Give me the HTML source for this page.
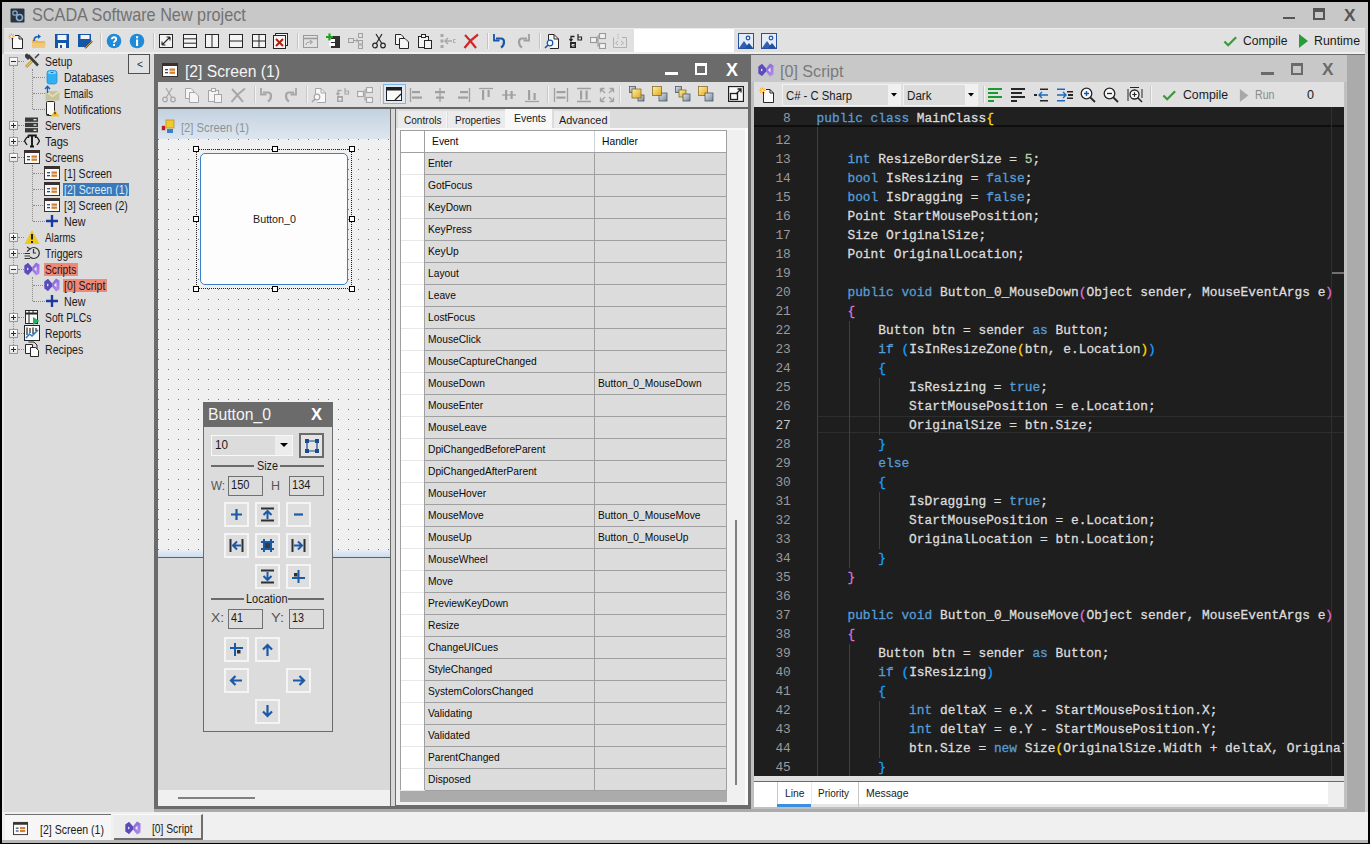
<!DOCTYPE html><html><head><meta charset="utf-8"><style>
html,body{margin:0;padding:0;}
body{width:1370px;height:844px;position:relative;overflow:hidden;background:#000;font-family:"Liberation Sans",sans-serif;}
div,svg{box-sizing:border-box;}
</style></head><body>
<div style="position:absolute;left:2px;top:2px;width:1366px;height:841px;background:#c8c8c8;"></div>
<svg style="position:absolute;left:10px;top:8px;" width="15" height="15" viewBox="0 0 15 15"><rect x="0.5" y="0.5" width="14" height="14" rx="1" fill="#2a3440"/><circle cx="5" cy="5" r="2.2" fill="none" stroke="#8aa8c8" stroke-width="1.3"/><circle cx="9.5" cy="9.5" r="3" fill="none" stroke="#8ab0d8" stroke-width="1.6"/></svg>
<div style="position:absolute;left:32px;top:6.96px;font-family:'Liberation Sans';font-size:17.7px;color:#727272;white-space:pre;line-height:1;transform:scaleX(0.9179);transform-origin:0 0;">SCADA Software New project</div>
<div style="position:absolute;left:1283px;top:17px;width:12px;height:2px;background:#555555;"></div>
<div style="position:absolute;left:1313px;top:8px;width:12px;height:12px;border:2px solid #555555;border-top-width:4px;"></div>
<div style="position:absolute;left:1343.5px;top:6.55px;font-family:'Liberation Sans';font-size:17px;color:#555555;white-space:pre;line-height:1;font-weight:bold;transform:scaleX(1.0142);transform-origin:0 0;">X</div>
<div style="position:absolute;left:4px;top:28px;width:1361px;height:25px;background:#e1e1e1;border-top:1px solid #ececec;"></div>
<div style="position:absolute;left:4px;top:52px;width:1361px;height:2px;background:#f0f0f0;"></div>
<div style="position:absolute;left:634px;top:29px;width:100px;height:23px;background:#fff;"></div>
<svg style="position:absolute;left:8px;top:33px;" width="16" height="16" viewBox="0 0 16 16"><path d="M4.5 4.5 V15.5 H14.5 V6 L11 2.5 H7" fill="#fafafa" stroke="#262626" stroke-width="1"/><path d="M11 2.5 V6 H14.5" fill="none" stroke="#262626"/><g stroke="#f0a030" stroke-width="1"><path d="M3.5 0.5 V6.5 M0.5 3.5 H6.5 M1.3 1.3 L5.7 5.7 M5.7 1.3 L1.3 5.7"/></g><circle cx="3.5" cy="3.5" r="1.2" fill="#fff3c0"/></svg>
<svg style="position:absolute;left:31px;top:33px;" width="16" height="16" viewBox="0 0 16 16"><path d="M1 7 H6 L7 8 H14 V15 H1 Z" fill="#e8b860"/><path d="M1 10 H15 L13.5 15 H1 Z" fill="#f0c878"/><path d="M3 8 C3 4 5 3.5 8 3.5" fill="none" stroke="#1a5fb4" stroke-width="1.6"/><path d="M7 1 L10 3.5 L7 6 Z" fill="#1a5fb4"/></svg>
<svg style="position:absolute;left:54px;top:33px;" width="16" height="16" viewBox="0 0 16 16"><path d="M1 1 H15 V15 H1 Z" fill="#1656a8"/><rect x="3.5" y="2" width="9" height="5" fill="#f4f4f4"/><rect x="4" y="10" width="8" height="5" fill="#f4f4f4"/><rect x="6" y="12" width="2" height="3" fill="#1656a8"/></svg>
<svg style="position:absolute;left:77px;top:33px;" width="16" height="16" viewBox="0 0 16 16"><path d="M1 1 H14 V9 L9 14 H1 Z" fill="#1656a8"/><rect x="3.5" y="2" width="9" height="4" fill="#f4f4f4"/><path d="M8 15 L15 8" stroke="#505050" stroke-width="2.2"/><path d="M8 15 L15 8" stroke="#e0a040" stroke-width="0.8"/></svg>
<svg style="position:absolute;left:106px;top:33px;" width="16" height="16" viewBox="0 0 16 16"><circle cx="8" cy="8" r="7.3" fill="#1f8ad8"/><path d="M5.8 6.2 C5.8 3.6 10.2 3.6 10.2 6.2 C10.2 8 8 8 8 9.8" fill="none" stroke="#fff" stroke-width="1.9"/><rect x="7" y="11" width="2" height="2" fill="#fff"/></svg>
<svg style="position:absolute;left:129px;top:33px;" width="16" height="16" viewBox="0 0 16 16"><circle cx="8" cy="8" r="7.3" fill="#1f8ad8"/><rect x="7" y="3.2" width="2.1" height="2.1" fill="#fff"/><rect x="7" y="6.5" width="2.1" height="6.5" fill="#fff"/></svg>
<svg style="position:absolute;left:158px;top:33px;" width="16" height="16" viewBox="0 0 16 16"><rect x="1.5" y="1.5" width="13" height="13" fill="#f4f4f4" stroke="#262626"/><path d="M4 12 L12 4 M4 12 V8.5 M4 12 H7.5 M12 4 H8.5 M12 4 V7.5" stroke="#262626" fill="none" stroke-width="1.1"/></svg>
<svg style="position:absolute;left:182px;top:33px;" width="16" height="16" viewBox="0 0 16 16"><rect x="1.5" y="1.5" width="13" height="13" fill="#f4f4f4" stroke="#262626"/><path d="M1.5 5.8 H14.5 M1.5 10.2 H14.5" stroke="#262626"/></svg>
<svg style="position:absolute;left:204px;top:33px;" width="16" height="16" viewBox="0 0 16 16"><rect x="1.5" y="1.5" width="13" height="13" fill="#f4f4f4" stroke="#262626"/><path d="M8 1.5 V14.5" stroke="#262626"/></svg>
<svg style="position:absolute;left:228px;top:33px;" width="16" height="16" viewBox="0 0 16 16"><rect x="1.5" y="1.5" width="13" height="13" fill="#f4f4f4" stroke="#262626"/><path d="M1.5 8 H14.5" stroke="#262626"/></svg>
<svg style="position:absolute;left:251px;top:33px;" width="16" height="16" viewBox="0 0 16 16"><rect x="1.5" y="1.5" width="13" height="13" fill="#f4f4f4" stroke="#262626"/><path d="M1.5 8 H14.5 M8 1.5 V14.5" stroke="#262626"/></svg>
<svg style="position:absolute;left:272px;top:33px;" width="16" height="16" viewBox="0 0 16 16"><rect x="3.5" y="0.5" width="12" height="12" fill="#f4f4f4" stroke="#262626"/><rect x="1.5" y="2.5" width="12" height="13" fill="#f4f4f4" stroke="#262626"/><path d="M4 6 L11 13 M11 6 L4 13" stroke="#b02010" stroke-width="2"/></svg>
<svg style="position:absolute;left:302px;top:33px;" width="16" height="16" viewBox="0 0 16 16"><rect x="1.5" y="2.5" width="14" height="12" fill="none" stroke="#9a9a9a"/><path d="M1.5 5.5 H15.5" stroke="#9a9a9a" stroke-width="1.5"/><path d="M4 12 C4 9 7 9 10 9 M8 7 L10.5 9 L8 11" fill="none" stroke="#9a9a9a"/></svg>
<svg style="position:absolute;left:325px;top:33px;" width="16" height="16" viewBox="0 0 16 16"><rect x="6" y="3" width="9" height="12" fill="#303030"/><rect x="4" y="6" width="6" height="3" fill="#fff"/><rect x="4" y="10" width="6" height="3" fill="#fff"/><path d="M4.5 0.5 V7.5 M1 4 H8" stroke="#20a020" stroke-width="2.2"/></svg>
<svg style="position:absolute;left:348px;top:33px;" width="16" height="16" viewBox="0 0 16 16"><rect x="0.5" y="5.5" width="5" height="4" fill="none" stroke="#a0a0a0"/><rect x="10.5" y="0.5" width="4" height="4" fill="none" stroke="#a0a0a0"/><rect x="10.5" y="7.5" width="4" height="3.5" fill="none" stroke="#a0a0a0"/><rect x="10.5" y="12" width="4" height="3.5" fill="none" stroke="#a0a0a0"/><path d="M5.5 7.5 H10 M8 5.5 L10 7.5 L8 9.5" fill="none" stroke="#a0a0a0"/></svg>
<svg style="position:absolute;left:371px;top:33px;" width="16" height="16" viewBox="0 0 16 16"><circle cx="4" cy="12.5" r="2.3" fill="none" stroke="#262626" stroke-width="1.2"/><circle cx="12" cy="12.5" r="2.3" fill="none" stroke="#262626" stroke-width="1.2"/><path d="M5.2 10.5 L11 1 M10.8 10.5 L5 1" stroke="#262626" stroke-width="1.2"/></svg>
<svg style="position:absolute;left:394px;top:33px;" width="16" height="16" viewBox="0 0 16 16"><path d="M1.5 1.5 H7 L9.5 4 V11.5 H1.5 Z" fill="#f4f4f4" stroke="#262626"/><path d="M5.5 5.5 H11 L14.5 9 V15.5 H5.5 Z" fill="#f4f4f4" stroke="#262626"/></svg>
<svg style="position:absolute;left:417px;top:33px;" width="16" height="16" viewBox="0 0 16 16"><rect x="1.5" y="3.5" width="10" height="11" fill="#f4f4f4" stroke="#262626"/><rect x="4.5" y="1.5" width="4" height="3" fill="#f4f4f4" stroke="#262626"/><rect x="7.5" y="7.5" width="7" height="8" fill="#f4f4f4" stroke="#262626"/></svg>
<svg style="position:absolute;left:440px;top:33px;" width="16" height="16" viewBox="0 0 16 16"><rect x="0.5" y="1" width="3" height="3" fill="#a8a8a8"/><rect x="0.5" y="12" width="3" height="3" fill="#a8a8a8"/><rect x="0.5" y="6.5" width="3" height="3" fill="#a8a8a8"/><path d="M5 8 H12 M8 5 L5 8 L8 11" fill="none" stroke="#a8a8a8" stroke-width="1.5"/><path d="M15.5 6.5 H13.5 V9.5 H15.5" fill="none" stroke="#a8a8a8"/></svg>
<svg style="position:absolute;left:463px;top:33px;" width="16" height="16" viewBox="0 0 16 16"><path d="M2 2 C6 6 10 11 13 15 M15 1.5 C10 5 5 10 1.5 15" stroke="#d02828" stroke-width="2.2" fill="none"/></svg>
<svg style="position:absolute;left:492px;top:33px;" width="16" height="16" viewBox="0 0 16 16"><path d="M4 5.5 H9 C13 5.5 13 12 9 14.5" fill="none" stroke="#1656a8" stroke-width="2.2"/><path d="M2 1 V7.5 H7.5" fill="none" stroke="#1656a8" stroke-width="1.8"/></svg>
<svg style="position:absolute;left:515px;top:33px;" width="16" height="16" viewBox="0 0 16 16"><path d="M12 5.5 H7 C3 5.5 3 12 7 14.5" fill="none" stroke="#a0a0a0" stroke-width="2.2"/><path d="M14 1 V7.5 H8.5" fill="none" stroke="#a0a0a0" stroke-width="1.8"/></svg>
<svg style="position:absolute;left:544px;top:33px;" width="16" height="16" viewBox="0 0 16 16"><path d="M4.5 7 V1.5 H10 L14.5 6 V15.5 H6" fill="#f8f8f8" stroke="#262626"/><path d="M10 1.5 V6 H14.5" fill="none" stroke="#262626"/><circle cx="6" cy="10" r="2.8" fill="#f8f8f8" stroke="#1656a8" stroke-width="1.2"/><path d="M4 12 L1 15" stroke="#1656a8" stroke-width="1.6"/></svg>
<svg style="position:absolute;left:567px;top:33px;" width="16" height="16" viewBox="0 0 16 16"><rect x="3" y="9" width="6" height="6" fill="#262626"/><path d="M5 11.5 H7.5 M5 11.5 V13 H7.5" stroke="#fff" fill="none" stroke-width="0.9"/><path d="M7.5 3.5 H4 V7.5 M2.5 6 L4 8 L5.5 6" fill="none" stroke="#262626" stroke-width="1.3"/><path d="M11 1 V7 H14.5 V4 H11" fill="none" stroke="#262626" stroke-width="1.2"/></svg>
<svg style="position:absolute;left:590px;top:33px;" width="16" height="16" viewBox="0 0 16 16"><rect x="0.5" y="4.5" width="6" height="5" fill="#f4f4f4" stroke="#9a9a9a" stroke-width="1.2"/><rect x="9.5" y="0.5" width="6" height="5" fill="#f4f4f4" stroke="#9a9a9a" stroke-width="1.2"/><rect x="9.5" y="10.5" width="6" height="5" fill="#f4f4f4" stroke="#9a9a9a" stroke-width="1.2"/><path d="M6.5 7 H8 V3 H9.5 M8 7 V13 H9.5" fill="none" stroke="#9a9a9a" stroke-width="1.2"/></svg>
<svg style="position:absolute;left:612px;top:33px;" width="16" height="16" viewBox="0 0 16 16"><path d="M1.5 4.5 V14.5 H14.5 V4.5 H10" fill="none" stroke="#b0b0b0"/><path d="M6 1 V6" stroke="#b0b0b0" stroke-dasharray="1 1"/><path d="M9 8 L11.5 10 L9 12 M6 8 L3.5 10 L6 12" fill="none" stroke="#b0b0b0"/></svg>
<svg style="position:absolute;left:738px;top:33px;" width="16" height="16" viewBox="0 0 16 16"><rect x="0.5" y="0.5" width="15" height="15" fill="#e4ecf8" stroke="#2850a0"/><circle cx="10" cy="5" r="1.8" fill="none" stroke="#2850a0" stroke-width="1.2"/><path d="M1 15 L6 8 L11 15 Z" fill="#3060b0"/><path d="M7 15 L11 10 L15 15 Z" fill="#2050a0"/></svg>
<svg style="position:absolute;left:761px;top:33px;" width="16" height="16" viewBox="0 0 16 16"><rect x="0.5" y="0.5" width="15" height="15" fill="#e4ecf8" stroke="#2850a0"/><circle cx="10" cy="5" r="1.8" fill="none" stroke="#2850a0" stroke-width="1.2"/><path d="M1 15 L6 8 L11 15 Z" fill="#3060b0"/><path d="M7 15 L11 10 L15 15 Z" fill="#2050a0"/></svg>
<div style="position:absolute;left:100px;top:33px;width:2px;height:16px;background:#c4c4c4;border-right:1px solid #f6f6f6;"></div>
<div style="position:absolute;left:153px;top:33px;width:2px;height:16px;background:#c4c4c4;border-right:1px solid #f6f6f6;"></div>
<div style="position:absolute;left:297px;top:33px;width:2px;height:16px;background:#c4c4c4;border-right:1px solid #f6f6f6;"></div>
<div style="position:absolute;left:487px;top:33px;width:2px;height:16px;background:#c4c4c4;border-right:1px solid #f6f6f6;"></div>
<div style="position:absolute;left:539px;top:33px;width:2px;height:16px;background:#c4c4c4;border-right:1px solid #f6f6f6;"></div>
<svg style="position:absolute;left:1223px;top:34px;" width="15" height="15" viewBox="0 0 16 16"><path d="M1.5 8 L5.5 12 L14 3.5" fill="none" stroke="#3a9a3a" stroke-width="2.4"/></svg>
<div style="position:absolute;left:1243px;top:34.80px;font-family:'Liberation Sans';font-size:12px;color:#1a1a1a;white-space:pre;line-height:1;transform:scaleX(1.0110);transform-origin:0 0;">Compile</div>
<svg style="position:absolute;left:1297px;top:33px;" width="16" height="16" viewBox="0 0 16 16"><path d="M2 1 L11 8 L2 15 Z" fill="#2a9a3a"/></svg>
<div style="position:absolute;left:1314px;top:34.80px;font-family:'Liberation Sans';font-size:12px;color:#1a1a1a;white-space:pre;line-height:1;transform:scaleX(1.0294);transform-origin:0 0;">Runtime</div>
<div style="position:absolute;left:2px;top:54px;width:2px;height:788px;background:#e8e8e8;"></div>
<div style="position:absolute;left:4px;top:54px;width:150px;height:758px;background:#dcdcdc;"></div>
<div style="position:absolute;left:128px;top:54px;width:22px;height:20px;border:1px solid #505050;background:#e2e2e2;"></div>
<div style="position:absolute;left:136.5px;top:58.65px;font-family:'Liberation Sans';font-size:11px;color:#303030;white-space:pre;line-height:1;transform:scaleX(0.9340);transform-origin:0 0;">&lt;</div>
<div style="position:absolute;left:13px;top:66px;width:1px;height:283px;border-left:1px dotted #8a8a8a;"></div>
<div style="position:absolute;left:32px;top:69px;width:1px;height:40px;border-left:1px dotted #8a8a8a;"></div>
<div style="position:absolute;left:32px;top:165px;width:1px;height:56px;border-left:1px dotted #8a8a8a;"></div>
<div style="position:absolute;left:32px;top:277px;width:1px;height:24px;border-left:1px dotted #8a8a8a;"></div>
<div style="position:absolute;left:18px;top:61px;width:6px;height:1px;border-top:1px dotted #8a8a8a;"></div>
<svg style="position:absolute;left:24px;top:53px;" width="16" height="16" viewBox="0 0 16 16"><path d="M2 14 L9 7" stroke="#c0a040" stroke-width="3"/><path d="M2.5 13.5 L8.5 7.5" stroke="#e8d080" stroke-width="1"/><path d="M4 2 L14 12.5" stroke="#3a3a3a" stroke-width="2.6"/><path d="M3.5 0.5 C1 0.5 0.5 3 1.5 4.5 L4 7 L6.5 4.5 L4 2 Z" fill="#3a3a3a"/><path d="M15 1 L11 5" stroke="#3a3a3a" stroke-width="1.5"/></svg>
<div style="position:absolute;left:45.2px;top:56.23px;font-family:'Liberation Sans';font-size:12.2px;color:#1a1a1a;white-space:pre;line-height:1;transform:scaleX(0.8563);transform-origin:0 0;">Setup</div>
<div style="position:absolute;left:9px;top:57px;width:9px;height:9px;border:1px solid #9a9a9a;background:linear-gradient(#fdfdfd,#e4e4e4);"></div>
<div style="position:absolute;left:11px;top:61px;width:5px;height:1px;background:#202a50;"></div>
<div style="position:absolute;left:33px;top:77px;width:12px;height:1px;border-top:1px dotted #8a8a8a;"></div>
<svg style="position:absolute;left:44px;top:69px;" width="16" height="16" viewBox="0 0 16 16"><rect x="3" y="1.5" width="10" height="13.5" rx="2.5" fill="#30b0f0" stroke="#2090d8" stroke-width="0.8"/><ellipse cx="8" cy="3.5" rx="4.2" ry="1.6" fill="#80d4ff"/><ellipse cx="8" cy="3.5" rx="1.5" ry="0.6" fill="#1060a0"/></svg>
<div style="position:absolute;left:64.3px;top:72.23px;font-family:'Liberation Sans';font-size:12.2px;color:#1a1a1a;white-space:pre;line-height:1;transform:scaleX(0.8572);transform-origin:0 0;">Databases</div>
<div style="position:absolute;left:33px;top:93px;width:12px;height:1px;border-top:1px dotted #8a8a8a;"></div>
<svg style="position:absolute;left:44px;top:85px;" width="16" height="16" viewBox="0 0 16 16"><rect x="1.5" y="6" width="14" height="9.5" fill="#c8c49a"/><path d="M1.5 6 L8.5 11.5 L15.5 6" fill="none" stroke="#e8e4c0" stroke-width="1.2"/><path d="M3.5 8 V1.5 M1 4 L3.5 1.2 L6 4" fill="none" stroke="#1a60b8" stroke-width="1.4"/></svg>
<div style="position:absolute;left:64.3px;top:88.23px;font-family:'Liberation Sans';font-size:12.2px;color:#1a1a1a;white-space:pre;line-height:1;transform:scaleX(0.7949);transform-origin:0 0;">Emails</div>
<div style="position:absolute;left:33px;top:109px;width:12px;height:1px;border-top:1px dotted #8a8a8a;"></div>
<svg style="position:absolute;left:44px;top:101px;" width="16" height="16" viewBox="0 0 16 16"><rect x="2.5" y="0.5" width="8" height="14" rx="0.8" fill="#fafafa" stroke="#262626"/><rect x="3" y="13" width="2" height="1" fill="#262626"/><path d="M11 9 L15.5 15.5 H6.5 Z" fill="#f0c020"/><path d="M11 11 V13.2" stroke="#262626" stroke-width="1.2"/></svg>
<div style="position:absolute;left:64.3px;top:104.23px;font-family:'Liberation Sans';font-size:12.2px;color:#1a1a1a;white-space:pre;line-height:1;transform:scaleX(0.8608);transform-origin:0 0;">Notifications</div>
<div style="position:absolute;left:18px;top:125px;width:6px;height:1px;border-top:1px dotted #8a8a8a;"></div>
<svg style="position:absolute;left:24px;top:117px;" width="16" height="16" viewBox="0 0 16 16"><rect x="1" y="0.5" width="13" height="4.3" fill="#3a3a3a"/><rect x="1" y="5.8" width="13" height="4.3" fill="#3a3a3a"/><rect x="1" y="11.1" width="13" height="4.3" fill="#3a3a3a"/><rect x="9.5" y="2" width="3" height="1.4" fill="#e0e0e0"/><rect x="9.5" y="7.3" width="3" height="1.4" fill="#e0e0e0"/><rect x="9.5" y="12.6" width="3" height="1.4" fill="#e0e0e0"/></svg>
<div style="position:absolute;left:45.2px;top:120.23px;font-family:'Liberation Sans';font-size:12.2px;color:#1a1a1a;white-space:pre;line-height:1;transform:scaleX(0.8422);transform-origin:0 0;">Servers</div>
<div style="position:absolute;left:9px;top:121px;width:9px;height:9px;border:1px solid #9a9a9a;background:linear-gradient(#fdfdfd,#e4e4e4);"></div>
<div style="position:absolute;left:11px;top:125px;width:5px;height:1px;background:#202a50;"></div>
<div style="position:absolute;left:13px;top:123px;width:1px;height:5px;background:#202a50;"></div>
<div style="position:absolute;left:18px;top:141px;width:6px;height:1px;border-top:1px dotted #8a8a8a;"></div>
<svg style="position:absolute;left:24px;top:133px;" width="16" height="16" viewBox="0 0 16 16"><path d="M3 4 L0.5 8 L3 12" fill="none" stroke="#161616" stroke-width="1.3"/><path d="M13 4 L15.5 8 L13 12" fill="none" stroke="#161616" stroke-width="1.3"/><path d="M4.2 2.5 H11.8 V5 M4.2 2.5 V5 M8 2.5 V13.5 M6 13.5 H10" fill="none" stroke="#161616" stroke-width="1.9"/></svg>
<div style="position:absolute;left:45.2px;top:136.23px;font-family:'Liberation Sans';font-size:12.2px;color:#1a1a1a;white-space:pre;line-height:1;transform:scaleX(0.9080);transform-origin:0 0;">Tags</div>
<div style="position:absolute;left:9px;top:137px;width:9px;height:9px;border:1px solid #9a9a9a;background:linear-gradient(#fdfdfd,#e4e4e4);"></div>
<div style="position:absolute;left:11px;top:141px;width:5px;height:1px;background:#202a50;"></div>
<div style="position:absolute;left:13px;top:139px;width:1px;height:5px;background:#202a50;"></div>
<div style="position:absolute;left:18px;top:157px;width:6px;height:1px;border-top:1px dotted #8a8a8a;"></div>
<svg style="position:absolute;left:24px;top:149px;" width="16" height="16" viewBox="0 0 16 16"><rect x="0.5" y="1.5" width="15" height="13" fill="#fafafa" stroke="#3a3030"/><rect x="0.5" y="1.5" width="15" height="2.5" fill="#3a3030"/><rect x="3" y="7" width="3" height="1.3" fill="#3a4a6a"/><rect x="3" y="10" width="3" height="1.3" fill="#3a4a6a"/><rect x="7.5" y="6.5" width="5.5" height="2.2" fill="#d08030"/><rect x="7.5" y="9.6" width="5.5" height="2.2" fill="#d08030"/></svg>
<div style="position:absolute;left:45.2px;top:152.23px;font-family:'Liberation Sans';font-size:12.2px;color:#1a1a1a;white-space:pre;line-height:1;transform:scaleX(0.8580);transform-origin:0 0;">Screens</div>
<div style="position:absolute;left:9px;top:153px;width:9px;height:9px;border:1px solid #9a9a9a;background:linear-gradient(#fdfdfd,#e4e4e4);"></div>
<div style="position:absolute;left:11px;top:157px;width:5px;height:1px;background:#202a50;"></div>
<div style="position:absolute;left:33px;top:173px;width:12px;height:1px;border-top:1px dotted #8a8a8a;"></div>
<svg style="position:absolute;left:44px;top:165px;" width="16" height="16" viewBox="0 0 16 16"><rect x="0.5" y="1.5" width="15" height="13" fill="#fafafa" stroke="#3a3030"/><rect x="0.5" y="1.5" width="15" height="2.5" fill="#3a3030"/><rect x="3" y="7" width="3" height="1.3" fill="#3a4a6a"/><rect x="3" y="10" width="3" height="1.3" fill="#3a4a6a"/><rect x="7.5" y="6.5" width="5.5" height="2.2" fill="#d08030"/><rect x="7.5" y="9.6" width="5.5" height="2.2" fill="#d08030"/></svg>
<div style="position:absolute;left:64.3px;top:168.23px;font-family:'Liberation Sans';font-size:12.2px;color:#1a1a1a;white-space:pre;line-height:1;transform:scaleX(0.8632);transform-origin:0 0;">[1] Screen</div>
<div style="position:absolute;left:33px;top:189px;width:12px;height:1px;border-top:1px dotted #8a8a8a;"></div>
<svg style="position:absolute;left:44px;top:181px;" width="16" height="16" viewBox="0 0 16 16"><rect x="0.5" y="1.5" width="15" height="13" fill="#fafafa" stroke="#3a3030"/><rect x="0.5" y="1.5" width="15" height="2.5" fill="#3a3030"/><rect x="3" y="7" width="3" height="1.3" fill="#3a4a6a"/><rect x="3" y="10" width="3" height="1.3" fill="#3a4a6a"/><rect x="7.5" y="6.5" width="5.5" height="2.2" fill="#d08030"/><rect x="7.5" y="9.6" width="5.5" height="2.2" fill="#d08030"/></svg>
<div style="position:absolute;left:63px;top:183px;width:66px;height:13px;background:#3b78b8;"></div>
<div style="position:absolute;left:64.3px;top:184.23px;font-family:'Liberation Sans';font-size:12.2px;color:#d8ecfa;white-space:pre;line-height:1;transform:scaleX(0.8686);transform-origin:0 0;">[2] Screen (1)</div>
<div style="position:absolute;left:33px;top:205px;width:12px;height:1px;border-top:1px dotted #8a8a8a;"></div>
<svg style="position:absolute;left:44px;top:197px;" width="16" height="16" viewBox="0 0 16 16"><rect x="0.5" y="1.5" width="15" height="13" fill="#fafafa" stroke="#3a3030"/><rect x="0.5" y="1.5" width="15" height="2.5" fill="#3a3030"/><rect x="3" y="7" width="3" height="1.3" fill="#3a4a6a"/><rect x="3" y="10" width="3" height="1.3" fill="#3a4a6a"/><rect x="7.5" y="6.5" width="5.5" height="2.2" fill="#d08030"/><rect x="7.5" y="9.6" width="5.5" height="2.2" fill="#d08030"/></svg>
<div style="position:absolute;left:64.3px;top:200.23px;font-family:'Liberation Sans';font-size:12.2px;color:#1a1a1a;white-space:pre;line-height:1;transform:scaleX(0.8632);transform-origin:0 0;">[3] Screen (2)</div>
<div style="position:absolute;left:33px;top:221px;width:12px;height:1px;border-top:1px dotted #8a8a8a;"></div>
<svg style="position:absolute;left:44px;top:213px;" width="16" height="16" viewBox="0 0 16 16"><path d="M8 2 V14 M2 8 H14" stroke="#1a3aa0" stroke-width="2.4"/></svg>
<div style="position:absolute;left:64.3px;top:216.23px;font-family:'Liberation Sans';font-size:12.2px;color:#1a1a1a;white-space:pre;line-height:1;transform:scaleX(0.8768);transform-origin:0 0;">New</div>
<div style="position:absolute;left:18px;top:237px;width:6px;height:1px;border-top:1px dotted #8a8a8a;"></div>
<svg style="position:absolute;left:24px;top:229px;" width="16" height="16" viewBox="0 0 16 16"><path d="M8 1 L15.5 15 H0.5 Z" fill="#f0c818"/><rect x="7" y="5" width="2" height="5.5" fill="#202020"/><rect x="7" y="12" width="2" height="2" fill="#202020"/></svg>
<div style="position:absolute;left:45.2px;top:232.23px;font-family:'Liberation Sans';font-size:12.2px;color:#1a1a1a;white-space:pre;line-height:1;transform:scaleX(0.8035);transform-origin:0 0;">Alarms</div>
<div style="position:absolute;left:9px;top:233px;width:9px;height:9px;border:1px solid #9a9a9a;background:linear-gradient(#fdfdfd,#e4e4e4);"></div>
<div style="position:absolute;left:11px;top:237px;width:5px;height:1px;background:#202a50;"></div>
<div style="position:absolute;left:13px;top:235px;width:1px;height:5px;background:#202a50;"></div>
<div style="position:absolute;left:18px;top:253px;width:6px;height:1px;border-top:1px dotted #8a8a8a;"></div>
<svg style="position:absolute;left:24px;top:245px;" width="16" height="16" viewBox="0 0 16 16"><path d="M6 4 A5.5 5.5 0 1 1 6 12" fill="none" stroke="#303030" stroke-width="1.2"/><path d="M9.5 4 V8 H12" fill="none" stroke="#303030" stroke-width="1.2"/><path d="M3 2 L6 4 L3 6.5" fill="none" stroke="#303030" stroke-width="1.1"/><path d="M0.5 8.5 H6 M0.5 11 H6 M0.5 13.5 H6" stroke="#303030" stroke-width="1"/></svg>
<div style="position:absolute;left:45.2px;top:248.23px;font-family:'Liberation Sans';font-size:12.2px;color:#1a1a1a;white-space:pre;line-height:1;transform:scaleX(0.8466);transform-origin:0 0;">Triggers</div>
<div style="position:absolute;left:9px;top:249px;width:9px;height:9px;border:1px solid #9a9a9a;background:linear-gradient(#fdfdfd,#e4e4e4);"></div>
<div style="position:absolute;left:11px;top:253px;width:5px;height:1px;background:#202a50;"></div>
<div style="position:absolute;left:13px;top:251px;width:1px;height:5px;background:#202a50;"></div>
<div style="position:absolute;left:18px;top:269px;width:6px;height:1px;border-top:1px dotted #8a8a8a;"></div>
<svg style="position:absolute;left:24px;top:261px;" width="16" height="16" viewBox="0 0 16 16"><defs><linearGradient id="vsg" x1="0" y1="0" x2="1" y2="1"><stop offset="0" stop-color="#6a58c8"/><stop offset="1" stop-color="#b88ef0"/></linearGradient></defs><path d="M0.5 4.5 L4 2 L8 6.5 L12 1.5 L15.5 3.5 V12.5 L12 14.5 L8 9.5 L4 14 L0.5 11.5 Z" fill="url(#vsg)"/><path d="M0.5 4.5 L4 2 L8 6.5 L8 9.5 L4 14 L0.5 11.5 Z" fill="#5a4cb8"/><path d="M3 6.5 L5 8 L3 9.5 Z" fill="#e8e0f8"/><path d="M12.5 5.5 V10.5 L10 8 Z" fill="#f0e8fc"/></svg>
<div style="position:absolute;left:44.2px;top:263px;width:33.8px;height:13px;background:#f08878;"></div>
<div style="position:absolute;left:45.2px;top:264.23px;font-family:'Liberation Sans';font-size:12.2px;color:#1a1a1a;white-space:pre;line-height:1;transform:scaleX(0.8395);transform-origin:0 0;">Scripts</div>
<div style="position:absolute;left:9px;top:265px;width:9px;height:9px;border:1px solid #9a9a9a;background:linear-gradient(#fdfdfd,#e4e4e4);"></div>
<div style="position:absolute;left:11px;top:269px;width:5px;height:1px;background:#202a50;"></div>
<div style="position:absolute;left:33px;top:285px;width:12px;height:1px;border-top:1px dotted #8a8a8a;"></div>
<svg style="position:absolute;left:44px;top:277px;" width="16" height="16" viewBox="0 0 16 16"><defs><linearGradient id="vsg" x1="0" y1="0" x2="1" y2="1"><stop offset="0" stop-color="#6a58c8"/><stop offset="1" stop-color="#b88ef0"/></linearGradient></defs><path d="M0.5 4.5 L4 2 L8 6.5 L12 1.5 L15.5 3.5 V12.5 L12 14.5 L8 9.5 L4 14 L0.5 11.5 Z" fill="url(#vsg)"/><path d="M0.5 4.5 L4 2 L8 6.5 L8 9.5 L4 14 L0.5 11.5 Z" fill="#5a4cb8"/><path d="M3 6.5 L5 8 L3 9.5 Z" fill="#e8e0f8"/><path d="M12.5 5.5 V10.5 L10 8 Z" fill="#f0e8fc"/></svg>
<div style="position:absolute;left:63.3px;top:279px;width:43.9px;height:13px;background:#f08878;"></div>
<div style="position:absolute;left:64.3px;top:280.23px;font-family:'Liberation Sans';font-size:12.2px;color:#1a1a1a;white-space:pre;line-height:1;transform:scaleX(0.8600);transform-origin:0 0;">[0] Script</div>
<div style="position:absolute;left:33px;top:301px;width:12px;height:1px;border-top:1px dotted #8a8a8a;"></div>
<svg style="position:absolute;left:44px;top:293px;" width="16" height="16" viewBox="0 0 16 16"><path d="M8 2 V14 M2 8 H14" stroke="#1a3aa0" stroke-width="2.4"/></svg>
<div style="position:absolute;left:64.3px;top:296.23px;font-family:'Liberation Sans';font-size:12.2px;color:#1a1a1a;white-space:pre;line-height:1;transform:scaleX(0.8768);transform-origin:0 0;">New</div>
<div style="position:absolute;left:18px;top:317px;width:6px;height:1px;border-top:1px dotted #8a8a8a;"></div>
<svg style="position:absolute;left:24px;top:309px;" width="16" height="16" viewBox="0 0 16 16"><rect x="1.5" y="1.5" width="12" height="13" fill="#fafafa" stroke="#262626"/><path d="M1.5 4.5 H13.5" stroke="#262626" stroke-width="2"/><path d="M5 1.5 V14.5 M9 1.5 V4" stroke="#262626"/><path d="M9 8 L15.5 12 L9 16 Z" fill="#20b060"/></svg>
<div style="position:absolute;left:45.2px;top:312.23px;font-family:'Liberation Sans';font-size:12.2px;color:#1a1a1a;white-space:pre;line-height:1;transform:scaleX(0.8466);transform-origin:0 0;">Soft PLCs</div>
<div style="position:absolute;left:9px;top:313px;width:9px;height:9px;border:1px solid #9a9a9a;background:linear-gradient(#fdfdfd,#e4e4e4);"></div>
<div style="position:absolute;left:11px;top:317px;width:5px;height:1px;background:#202a50;"></div>
<div style="position:absolute;left:13px;top:315px;width:1px;height:5px;background:#202a50;"></div>
<div style="position:absolute;left:18px;top:333px;width:6px;height:1px;border-top:1px dotted #8a8a8a;"></div>
<svg style="position:absolute;left:24px;top:325px;" width="16" height="16" viewBox="0 0 16 16"><rect x="0.5" y="0.5" width="15" height="15" fill="#fafafa" stroke="#262626"/><path d="M2 13 L5.5 9 L8 11 L14 5" fill="none" stroke="#2a80d0" stroke-width="1.6"/><path d="M3 2.5 V10 M6 3 V8 M9 2.5 V9 M12 3 V6" stroke="#262626" stroke-width="1.2"/></svg>
<div style="position:absolute;left:45.2px;top:328.23px;font-family:'Liberation Sans';font-size:12.2px;color:#1a1a1a;white-space:pre;line-height:1;transform:scaleX(0.8497);transform-origin:0 0;">Reports</div>
<div style="position:absolute;left:9px;top:329px;width:9px;height:9px;border:1px solid #9a9a9a;background:linear-gradient(#fdfdfd,#e4e4e4);"></div>
<div style="position:absolute;left:11px;top:333px;width:5px;height:1px;background:#202a50;"></div>
<div style="position:absolute;left:13px;top:331px;width:1px;height:5px;background:#202a50;"></div>
<div style="position:absolute;left:18px;top:349px;width:6px;height:1px;border-top:1px dotted #8a8a8a;"></div>
<svg style="position:absolute;left:24px;top:341px;" width="16" height="16" viewBox="0 0 16 16"><path d="M1.5 3.5 H8.5 V12.5 H1.5 Z" fill="#fafafa" stroke="#262626"/><path d="M4.5 1 H10 L13 4 V13" fill="none" stroke="#262626"/><path d="M6.5 6.5 H11.5 L14.5 9.5 V15.5 H6.5 Z" fill="#fafafa" stroke="#262626"/></svg>
<div style="position:absolute;left:45.2px;top:344.23px;font-family:'Liberation Sans';font-size:12.2px;color:#1a1a1a;white-space:pre;line-height:1;transform:scaleX(0.8689);transform-origin:0 0;">Recipes</div>
<div style="position:absolute;left:9px;top:345px;width:9px;height:9px;border:1px solid #9a9a9a;background:linear-gradient(#fdfdfd,#e4e4e4);"></div>
<div style="position:absolute;left:11px;top:349px;width:5px;height:1px;background:#202a50;"></div>
<div style="position:absolute;left:13px;top:347px;width:1px;height:5px;background:#202a50;"></div>
<div style="position:absolute;left:154px;top:54px;width:1211px;height:758px;background:#ababab;"></div>
<div style="position:absolute;left:1365px;top:54px;width:3px;height:788px;background:#d0d0d0;"></div>
<div style="position:absolute;left:154px;top:54px;width:597px;height:755px;background:#6b6b6b;"></div>
<svg style="position:absolute;left:162px;top:62px;" width="16" height="16" viewBox="0 0 16 16"><rect x="0.5" y="1.5" width="15" height="13" fill="#fafafa" stroke="#3a3030"/><rect x="0.5" y="1.5" width="15" height="2.5" fill="#3a3030"/><rect x="3" y="7" width="3" height="1.3" fill="#3a4a6a"/><rect x="3" y="10" width="3" height="1.3" fill="#3a4a6a"/><rect x="7.5" y="6.5" width="5.5" height="2.2" fill="#d08030"/><rect x="7.5" y="9.6" width="5.5" height="2.2" fill="#d08030"/></svg>
<div style="position:absolute;left:185px;top:63.90px;font-family:'Liberation Sans';font-size:16px;color:#f4f4f4;white-space:pre;line-height:1;transform:scaleX(0.9801);transform-origin:0 0;">[2] Screen (1)</div>
<div style="position:absolute;left:665px;top:72px;width:13px;height:2.5px;background:#fff;"></div>
<div style="position:absolute;left:695px;top:63px;width:12px;height:12px;border:2px solid #fff;border-top-width:3px;"></div>
<div style="position:absolute;left:725.5px;top:60.70px;font-family:'Liberation Sans';font-size:18px;color:#ffffff;white-space:pre;line-height:1;font-weight:bold;transform:scaleX(0.9995);transform-origin:0 0;">X</div>
<div style="position:absolute;left:158px;top:82px;width:590px;height:25px;background:#e0e0e0;"></div>
<div style="position:absolute;left:158px;top:107px;width:590px;height:2px;background:#666666;"></div>
<svg style="position:absolute;left:161px;top:87px;" width="16" height="16" viewBox="0 0 16 16"><circle cx="4" cy="12.5" r="2.3" fill="none" stroke="#a6a6a6" stroke-width="1.2"/><circle cx="12" cy="12.5" r="2.3" fill="none" stroke="#a6a6a6" stroke-width="1.2"/><path d="M5.2 10.5 L11 1 M10.8 10.5 L5 1" stroke="#a6a6a6" stroke-width="1.2"/></svg>
<svg style="position:absolute;left:184px;top:87px;" width="16" height="16" viewBox="0 0 16 16"><path d="M1.5 1.5 H7 L9.5 4 V11.5 H1.5 Z" fill="#f4f4f4" stroke="#a6a6a6"/><path d="M5.5 5.5 H11 L14.5 9 V15.5 H5.5 Z" fill="#f4f4f4" stroke="#a6a6a6"/></svg>
<svg style="position:absolute;left:207px;top:87px;" width="16" height="16" viewBox="0 0 16 16"><rect x="1.5" y="3.5" width="10" height="11" fill="#f4f4f4" stroke="#a6a6a6"/><rect x="4.5" y="1.5" width="4" height="3" fill="#f4f4f4" stroke="#a6a6a6"/><rect x="7.5" y="7.5" width="7" height="8" fill="#f4f4f4" stroke="#a6a6a6"/></svg>
<svg style="position:absolute;left:230px;top:87px;" width="16" height="16" viewBox="0 0 16 16"><path d="M2 2 C6 6 10 11 13 15 M15 1.5 C10 5 5 10 1.5 15" stroke="#a6a6a6" stroke-width="2" fill="none"/></svg>
<svg style="position:absolute;left:259px;top:87px;" width="16" height="16" viewBox="0 0 16 16"><path d="M4 5.5 H9 C13 5.5 13 12 9 14.5" fill="none" stroke="#a6a6a6" stroke-width="2.2"/><path d="M2 1 V7.5 H7.5" fill="none" stroke="#a6a6a6" stroke-width="1.8"/></svg>
<svg style="position:absolute;left:282px;top:87px;" width="16" height="16" viewBox="0 0 16 16"><path d="M12 5.5 H7 C3 5.5 3 12 7 14.5" fill="none" stroke="#a6a6a6" stroke-width="2.2"/><path d="M14 1 V7.5 H8.5" fill="none" stroke="#a6a6a6" stroke-width="1.8"/></svg>
<svg style="position:absolute;left:311px;top:87px;" width="16" height="16" viewBox="0 0 16 16"><path d="M4.5 7 V1.5 H10 L14.5 6 V15.5 H6" fill="#f8f8f8" stroke="#a6a6a6"/><path d="M10 1.5 V6 H14.5" fill="none" stroke="#a6a6a6"/><circle cx="6" cy="10" r="2.8" fill="#f8f8f8" stroke="#a6a6a6" stroke-width="1.2"/><path d="M4 12 L1 15" stroke="#a6a6a6" stroke-width="1.6"/></svg>
<svg style="position:absolute;left:334px;top:87px;" width="16" height="16" viewBox="0 0 16 16"><rect x="3" y="9" width="6" height="6" fill="#a6a6a6"/><path d="M5 11.5 H7.5 M5 11.5 V13 H7.5" stroke="#fff" fill="none" stroke-width="0.9"/><path d="M7.5 3.5 H4 V7.5 M2.5 6 L4 8 L5.5 6" fill="none" stroke="#a6a6a6" stroke-width="1.3"/><path d="M11 1 V7 H14.5 V4 H11" fill="none" stroke="#a6a6a6" stroke-width="1.2"/></svg>
<svg style="position:absolute;left:357px;top:87px;" width="16" height="16" viewBox="0 0 16 16"><rect x="0.5" y="4.5" width="6" height="5" fill="#f4f4f4" stroke="#a6a6a6" stroke-width="1.2"/><rect x="9.5" y="0.5" width="6" height="5" fill="#f4f4f4" stroke="#a6a6a6" stroke-width="1.2"/><rect x="9.5" y="10.5" width="6" height="5" fill="#f4f4f4" stroke="#a6a6a6" stroke-width="1.2"/><path d="M6.5 7 H8 V3 H9.5 M8 7 V13 H9.5" fill="none" stroke="#a6a6a6" stroke-width="1.2"/></svg>
<div style="position:absolute;left:254px;top:86px;width:2px;height:17px;background:#c8c8c8;border-right:1px solid #f4f4f4;"></div>
<div style="position:absolute;left:306px;top:86px;width:2px;height:17px;background:#c8c8c8;border-right:1px solid #f4f4f4;"></div>
<div style="position:absolute;left:380px;top:86px;width:2px;height:17px;background:#c8c8c8;border-right:1px solid #f4f4f4;"></div>
<div style="position:absolute;left:383px;top:84px;width:23px;height:20px;border:1px solid #7ab4e8;background:#dfe9f3;"></div>
<svg style="position:absolute;left:386px;top:86px;" width="16" height="16" viewBox="0 0 16 16"><rect x="0.5" y="1.5" width="15" height="13" fill="#fafafa" stroke="#202020"/><rect x="0.5" y="1.5" width="15" height="3" fill="#202020"/><path d="M9 14 L15 8" stroke="#202020" stroke-width="1.3"/></svg>
<svg style="position:absolute;left:409px;top:87px;" width="16" height="16" viewBox="0 0 16 16"><path d="M1.5 1 V15" stroke="#a0a0a0" stroke-width="1.3"/><rect x="3" y="4" width="8" height="2.2" fill="#a0a0a0"/><rect x="3" y="9.5" width="10" height="2.2" fill="#a0a0a0"/></svg>
<svg style="position:absolute;left:432px;top:87px;" width="16" height="16" viewBox="0 0 16 16"><path d="M8 1 V15" stroke="#a0a0a0" stroke-width="1.3"/><rect x="3" y="4" width="10" height="2.2" fill="#a0a0a0"/><rect x="4" y="9.5" width="8" height="2.2" fill="#a0a0a0"/></svg>
<svg style="position:absolute;left:455px;top:87px;" width="16" height="16" viewBox="0 0 16 16"><path d="M14.5 1 V15" stroke="#a0a0a0" stroke-width="1.3"/><rect x="5" y="4" width="8" height="2.2" fill="#a0a0a0"/><rect x="3" y="9.5" width="10" height="2.2" fill="#a0a0a0"/></svg>
<svg style="position:absolute;left:478px;top:87px;" width="16" height="16" viewBox="0 0 16 16"><path d="M1 1.5 H15" stroke="#a0a0a0" stroke-width="1.3"/><rect x="4" y="3" width="2.2" height="10" fill="#a0a0a0"/><rect x="9.5" y="3" width="2.2" height="7" fill="#a0a0a0"/></svg>
<svg style="position:absolute;left:501px;top:87px;" width="16" height="16" viewBox="0 0 16 16"><path d="M1 8 H15" stroke="#a0a0a0" stroke-width="1.3"/><rect x="4" y="3" width="2.2" height="10" fill="#a0a0a0"/><rect x="9.5" y="4" width="2.2" height="8" fill="#a0a0a0"/></svg>
<svg style="position:absolute;left:524px;top:87px;" width="16" height="16" viewBox="0 0 16 16"><path d="M1 14.5 H15" stroke="#a0a0a0" stroke-width="1.3"/><rect x="4" y="3" width="2.2" height="10" fill="#a0a0a0"/><rect x="9.5" y="6" width="2.2" height="7" fill="#a0a0a0"/></svg>
<svg style="position:absolute;left:553px;top:87px;" width="16" height="16" viewBox="0 0 16 16"><path d="M1.5 1 V15 M14.5 1 V15" stroke="#a0a0a0" stroke-width="1.3"/><rect x="3.5" y="4" width="9" height="2.2" fill="#a0a0a0"/><rect x="3.5" y="9.5" width="9" height="2.2" fill="#a0a0a0"/></svg>
<svg style="position:absolute;left:576px;top:87px;" width="16" height="16" viewBox="0 0 16 16"><path d="M1 1.5 H15 M1 14.5 H15" stroke="#a0a0a0" stroke-width="1.3"/><rect x="4" y="3.5" width="2.2" height="9" fill="#a0a0a0"/><rect x="9.5" y="3.5" width="2.2" height="9" fill="#a0a0a0"/></svg>
<svg style="position:absolute;left:599px;top:87px;" width="16" height="16" viewBox="0 0 16 16"><path d="M1.5 1.5 L6 6 M14.5 1.5 L10 6 M1.5 14.5 L6 10 M14.5 14.5 L10 10 M1.5 1.5 H5.5 M1.5 1.5 V5.5 M14.5 1.5 H10.5 M14.5 1.5 V5.5 M1.5 14.5 H5.5 M1.5 14.5 V10.5 M14.5 14.5 H10.5 M14.5 14.5 V10.5" stroke="#a0a0a0" stroke-width="1.3" fill="none"/></svg>
<div style="position:absolute;left:547px;top:86px;width:2px;height:17px;background:#c8c8c8;border-right:1px solid #f4f4f4;"></div>
<div style="position:absolute;left:619px;top:86px;width:2px;height:17px;background:#c8c8c8;border-right:1px solid #f4f4f4;"></div>
<svg style="position:absolute;left:629px;top:86px;" width="16" height="16" viewBox="0 0 16 16"><defs><linearGradient id="gy" x1="0" y1="0" x2="1" y2="1"><stop offset="0" stop-color="#fff0a0"/><stop offset="1" stop-color="#e0a820"/></linearGradient><linearGradient id="gg" x1="0" y1="0" x2="1" y2="1"><stop offset="0" stop-color="#dde4ec"/><stop offset="1" stop-color="#7a8898"/></linearGradient></defs><rect x="0.5" y="0.5" width="6" height="6" fill="url(#gg)" stroke="#404850" stroke-width="0.7"/><rect x="9" y="9" width="6" height="6" fill="url(#gg)" stroke="#404850" stroke-width="0.7"/><rect x="3" y="3" width="9" height="9" fill="url(#gy)" stroke="#7a6020" stroke-width="0.7"/></svg>
<svg style="position:absolute;left:652px;top:86px;" width="16" height="16" viewBox="0 0 16 16"><defs><linearGradient id="gy" x1="0" y1="0" x2="1" y2="1"><stop offset="0" stop-color="#fff0a0"/><stop offset="1" stop-color="#e0a820"/></linearGradient><linearGradient id="gg" x1="0" y1="0" x2="1" y2="1"><stop offset="0" stop-color="#dde4ec"/><stop offset="1" stop-color="#7a8898"/></linearGradient></defs><rect x="7" y="7" width="8" height="8" fill="url(#gg)" stroke="#404850" stroke-width="0.7"/><rect x="0.5" y="0.5" width="9" height="9" fill="url(#gy)" stroke="#7a6020" stroke-width="0.7"/></svg>
<svg style="position:absolute;left:675px;top:86px;" width="16" height="16" viewBox="0 0 16 16"><defs><linearGradient id="gy" x1="0" y1="0" x2="1" y2="1"><stop offset="0" stop-color="#fff0a0"/><stop offset="1" stop-color="#e0a820"/></linearGradient><linearGradient id="gg" x1="0" y1="0" x2="1" y2="1"><stop offset="0" stop-color="#dde4ec"/><stop offset="1" stop-color="#7a8898"/></linearGradient></defs><rect x="0.5" y="0.5" width="6" height="6" fill="url(#gg)" stroke="#404850" stroke-width="0.7"/><rect x="4" y="4" width="7" height="7" fill="url(#gy)" stroke="#7a6020" stroke-width="0.7"/><rect x="8" y="8" width="7" height="7" fill="url(#gg)" stroke="#404850" stroke-width="0.7"/></svg>
<svg style="position:absolute;left:698px;top:86px;" width="16" height="16" viewBox="0 0 16 16"><defs><linearGradient id="gy" x1="0" y1="0" x2="1" y2="1"><stop offset="0" stop-color="#fff0a0"/><stop offset="1" stop-color="#e0a820"/></linearGradient><linearGradient id="gg" x1="0" y1="0" x2="1" y2="1"><stop offset="0" stop-color="#dde4ec"/><stop offset="1" stop-color="#7a8898"/></linearGradient></defs><rect x="0.5" y="0.5" width="9" height="9" fill="url(#gy)" stroke="#7a6020" stroke-width="0.7"/><rect x="7" y="7" width="8" height="8" fill="url(#gg)" stroke="#404850" stroke-width="0.7"/></svg>
<svg style="position:absolute;left:728px;top:86px;" width="16" height="16" viewBox="0 0 16 16"><rect x="0.5" y="0.5" width="15" height="15" fill="#fafafa" stroke="#202020" stroke-width="1.3"/><rect x="2.5" y="7.5" width="7" height="6" fill="none" stroke="#202020" stroke-width="1.3"/><path d="M8 8 L13 3 M9.5 3 H13 V6.5" fill="none" stroke="#202020" stroke-width="1.3"/></svg>
<svg style="position:absolute;left:158px;top:109px" width="232" height="449"><defs><pattern id="dots" x="0" y="0" width="10" height="10" patternUnits="userSpaceOnUse"><rect x="0" y="0" width="1" height="1" fill="#7a7a7a"/></pattern></defs><rect width="232" height="449" fill="#f0f0f0"/><rect width="232" height="449" fill="url(#dots)"/></svg>
<div style="position:absolute;left:158px;top:109px;width:232px;height:30px;background:linear-gradient(#c3d1df,#dde6ef);"></div>
<svg style="position:absolute;left:161px;top:119px;" width="16" height="16" viewBox="0 0 16 16"><rect x="0.5" y="6.5" width="4" height="5" fill="#b02020" stroke="#e0e0e0" stroke-width="0.6"/><rect x="5" y="1" width="8" height="8" fill="#f0c830" stroke="#c09020" stroke-width="0.8"/><rect x="6" y="10" width="6" height="4" fill="#3a80d0"/></svg>
<div style="position:absolute;left:180.5px;top:121.80px;font-family:'Liberation Sans';font-size:12px;color:#8a939c;white-space:pre;line-height:1;transform:scaleX(0.9354);transform-origin:0 0;">[2] Screen (1)</div>
<div style="position:absolute;left:158px;top:550px;width:232px;height:7px;background:linear-gradient(#e8eef6,#ccdcec);"></div>
<div style="position:absolute;left:158px;top:557px;width:232px;height:1px;background:#606060;"></div>
<div style="position:absolute;left:158px;top:558px;width:232px;height:232px;background:#d9d9d9;"></div>
<div style="position:absolute;left:158px;top:790px;width:232px;height:16px;background:#f0f0f0;"></div>
<div style="position:absolute;left:178px;top:797px;width:77px;height:2px;background:#808080;"></div>
<div style="position:absolute;left:196px;top:149px;width:156px;height:140px;border:1px dotted #202020;"></div>
<div style="position:absolute;left:200px;top:153px;width:148px;height:132px;background:#fdfdfd;border:1px solid #3b80c4;border-radius:5px;"></div>
<div style="position:absolute;left:252.5px;top:213.72px;font-family:'Liberation Sans';font-size:11.5px;color:#1a1a1a;white-space:pre;line-height:1;transform:scaleX(0.9340);transform-origin:0 0;">Button_0</div>
<div style="position:absolute;left:193px;top:146px;width:6px;height:6px;border:1px solid #000;background:#fff;"></div>
<div style="position:absolute;left:271.5px;top:146px;width:6px;height:6px;border:1px solid #000;background:#fff;"></div>
<div style="position:absolute;left:349px;top:146px;width:6px;height:6px;border:1px solid #000;background:#fff;"></div>
<div style="position:absolute;left:193px;top:216px;width:6px;height:6px;border:1px solid #000;background:#fff;"></div>
<div style="position:absolute;left:349px;top:216px;width:6px;height:6px;border:1px solid #000;background:#fff;"></div>
<div style="position:absolute;left:193px;top:286px;width:6px;height:6px;border:1px solid #000;background:#fff;"></div>
<div style="position:absolute;left:271.5px;top:286px;width:6px;height:6px;border:1px solid #000;background:#fff;"></div>
<div style="position:absolute;left:349px;top:286px;width:6px;height:6px;border:1px solid #000;background:#fff;"></div>
<div style="position:absolute;left:390px;top:109px;width:6px;height:697px;background:#d8d8d8;border-left:1px solid #6a6a6a;border-right:1px solid #6a6a6a;"></div>
<div style="position:absolute;left:203px;top:402px;width:130px;height:330px;background:#dcdcdc;border:1px solid #6b6b6b;"></div>
<div style="position:absolute;left:203px;top:402px;width:130px;height:25px;background:#6b6b6b;"></div>
<div style="position:absolute;left:208px;top:407.40px;font-family:'Liberation Sans';font-size:16px;color:#f4f4f4;white-space:pre;line-height:1;transform:scaleX(0.9835);transform-origin:0 0;">Button_0</div>
<div style="position:absolute;left:311px;top:407.40px;font-family:'Liberation Sans';font-size:16px;color:#ffffff;white-space:pre;line-height:1;font-weight:bold;transform:scaleX(1.0307);transform-origin:0 0;">X</div>
<div style="position:absolute;left:211px;top:435px;width:82px;height:21px;background:#dcdcdc;border:1px solid #f8f8f8;"></div>
<div style="position:absolute;left:275px;top:436px;width:17px;height:19px;background:#ececec;"></div>
<svg style="position:absolute;left:280px;top:443px;" width="8" height="4" viewBox="0 0 8 4"><path d="M0 0 H8 L4 4 Z" fill="#000"/></svg>
<div style="position:absolute;left:215px;top:439.30px;font-family:'Liberation Sans';font-size:12px;color:#1a1a1a;white-space:pre;line-height:1;transform:scaleX(0.9739);transform-origin:0 0;">10</div>
<div style="position:absolute;left:299px;top:433px;width:25px;height:25px;border:2px solid #6b6b6b;background:#e4e4e4;"></div>
<svg style="position:absolute;left:305px;top:439px;" width="14" height="14" viewBox="0 0 14 14"><path d="M2 2 H12 V12 H2 Z" fill="none" stroke="#1a4a8a" stroke-width="1.2"/><rect x="0" y="0" width="4" height="4" fill="#1a4a8a"/><rect x="10" y="0" width="4" height="4" fill="#1a4a8a"/><rect x="0" y="10" width="4" height="4" fill="#1a4a8a"/><rect x="10" y="10" width="4" height="4" fill="#1a4a8a"/></svg>
<div style="position:absolute;left:211px;top:465px;width:43px;height:2px;background:#6b6b6b;"></div>
<div style="position:absolute;left:280px;top:465px;width:44px;height:2px;background:#6b6b6b;"></div>
<div style="position:absolute;left:256.5px;top:459.80px;font-family:'Liberation Sans';font-size:12px;color:#1a1a1a;white-space:pre;line-height:1;transform:scaleX(0.8996);transform-origin:0 0;">Size</div>
<div style="position:absolute;left:210.5px;top:479.80px;font-family:'Liberation Sans';font-size:12px;color:#555;white-space:pre;line-height:1;transform:scaleX(0.9693);transform-origin:0 0;">W:</div>
<div style="position:absolute;left:228px;top:476px;width:35px;height:20px;border:1px solid #707070;background:#dcdcdc;"></div>
<div style="position:absolute;left:231px;top:479.30px;font-family:'Liberation Sans';font-size:12px;color:#1a1a1a;white-space:pre;line-height:1;transform:scaleX(0.9240);transform-origin:0 0;">150</div>
<div style="position:absolute;left:271px;top:479.80px;font-family:'Liberation Sans';font-size:12px;color:#555;white-space:pre;line-height:1;transform:scaleX(1.0385);transform-origin:0 0;">H</div>
<div style="position:absolute;left:289px;top:476px;width:35px;height:20px;border:1px solid #707070;background:#dcdcdc;"></div>
<div style="position:absolute;left:292px;top:479.30px;font-family:'Liberation Sans';font-size:12px;color:#1a1a1a;white-space:pre;line-height:1;transform:scaleX(0.9240);transform-origin:0 0;">134</div>
<div style="position:absolute;left:224px;top:502px;width:25px;height:25px;border:2px solid #f4f4f4;background:#dedede;"></div>
<svg style="position:absolute;left:228px;top:506px;" width="17" height="17" viewBox="0 0 17 17"><path d="M8.5 3 V14 M3 8.5 H14" stroke="#1a5aa8" stroke-width="2.2"/></svg>
<div style="position:absolute;left:255px;top:502px;width:25px;height:25px;border:2px solid #f4f4f4;background:#dedede;"></div>
<svg style="position:absolute;left:259px;top:506px;" width="17" height="17" viewBox="0 0 17 17"><path d="M2 2.5 H15 M2 14.5 H15" stroke="#303030" stroke-width="2"/><path d="M8.5 5 V13 M4.5 9 L8.5 5 L12.5 9" fill="none" stroke="#1a5aa8" stroke-width="2"/></svg>
<div style="position:absolute;left:286px;top:502px;width:25px;height:25px;border:2px solid #f4f4f4;background:#dedede;"></div>
<svg style="position:absolute;left:290px;top:506px;" width="17" height="17" viewBox="0 0 17 17"><path d="M4 8.5 H13" stroke="#1a5aa8" stroke-width="2.2"/></svg>
<div style="position:absolute;left:224px;top:533px;width:25px;height:25px;border:2px solid #f4f4f4;background:#dedede;"></div>
<svg style="position:absolute;left:228px;top:537px;" width="17" height="17" viewBox="0 0 17 17"><path d="M2.5 2 V15 M14.5 2 V15" stroke="#303030" stroke-width="2"/><path d="M5 8.5 H13 M9 4.5 L5 8.5 L9 12.5" fill="none" stroke="#1a5aa8" stroke-width="2"/></svg>
<div style="position:absolute;left:255px;top:533px;width:25px;height:25px;border:2px solid #f4f4f4;background:#dedede;"></div>
<svg style="position:absolute;left:259px;top:537px;" width="17" height="17" viewBox="0 0 17 17"><path d="M2 5 H15 M2 12 H15 M5 2 V15 M12 2 V15" stroke="#1a5aa8" stroke-width="2"/><rect x="6" y="6" width="5" height="5" fill="#3a3a3a"/></svg>
<div style="position:absolute;left:286px;top:533px;width:25px;height:25px;border:2px solid #f4f4f4;background:#dedede;"></div>
<svg style="position:absolute;left:290px;top:537px;" width="17" height="17" viewBox="0 0 17 17"><path d="M2.5 2 V15 M14.5 2 V15" stroke="#303030" stroke-width="2"/><path d="M4 8.5 H12 M8 4.5 L12 8.5 L8 12.5" fill="none" stroke="#1a5aa8" stroke-width="2"/></svg>
<div style="position:absolute;left:255px;top:564px;width:25px;height:25px;border:2px solid #f4f4f4;background:#dedede;"></div>
<svg style="position:absolute;left:259px;top:568px;" width="17" height="17" viewBox="0 0 17 17"><path d="M2 2.5 H15 M2 14.5 H15" stroke="#303030" stroke-width="2"/><path d="M8.5 4 V12 M4.5 8 L8.5 12 L12.5 8" fill="none" stroke="#1a5aa8" stroke-width="2"/></svg>
<div style="position:absolute;left:286px;top:564px;width:25px;height:25px;border:2px solid #f4f4f4;background:#dedede;"></div>
<svg style="position:absolute;left:290px;top:568px;" width="17" height="17" viewBox="0 0 17 17"><path d="M8.5 2 V15 M2 10 H15" stroke="#1a5aa8" stroke-width="2"/><rect x="4" y="5" width="3.5" height="3.5" fill="#303030"/></svg>
<div style="position:absolute;left:211px;top:598px;width:33px;height:2px;background:#6b6b6b;"></div>
<div style="position:absolute;left:288px;top:598px;width:36px;height:2px;background:#6b6b6b;"></div>
<div style="position:absolute;left:245.5px;top:592.80px;font-family:'Liberation Sans';font-size:12px;color:#1a1a1a;white-space:pre;line-height:1;transform:scaleX(0.9147);transform-origin:0 0;">Location</div>
<div style="position:absolute;left:210.5px;top:612.30px;font-family:'Liberation Sans';font-size:12px;color:#555;white-space:pre;line-height:1;transform:scaleX(1.1466);transform-origin:0 0;">X:</div>
<div style="position:absolute;left:228px;top:609px;width:35px;height:20px;border:1px solid #707070;background:#dcdcdc;"></div>
<div style="position:absolute;left:231px;top:611.80px;font-family:'Liberation Sans';font-size:12px;color:#1a1a1a;white-space:pre;line-height:1;transform:scaleX(0.8990);transform-origin:0 0;">41</div>
<div style="position:absolute;left:271px;top:612.30px;font-family:'Liberation Sans';font-size:12px;color:#555;white-space:pre;line-height:1;transform:scaleX(1.2177);transform-origin:0 0;">Y:</div>
<div style="position:absolute;left:289px;top:609px;width:35px;height:20px;border:1px solid #707070;background:#dcdcdc;"></div>
<div style="position:absolute;left:292px;top:611.80px;font-family:'Liberation Sans';font-size:12px;color:#1a1a1a;white-space:pre;line-height:1;transform:scaleX(0.8990);transform-origin:0 0;">13</div>
<div style="position:absolute;left:224px;top:637px;width:25px;height:25px;border:2px solid #f4f4f4;background:#dedede;"></div>
<svg style="position:absolute;left:228px;top:641px;" width="17" height="17" viewBox="0 0 17 17"><path d="M7 2 V15 M2 7 H15" stroke="#1a5aa8" stroke-width="2"/><rect x="9" y="9" width="3.5" height="3.5" fill="#303030"/></svg>
<div style="position:absolute;left:255px;top:637px;width:25px;height:25px;border:2px solid #f4f4f4;background:#dedede;"></div>
<svg style="position:absolute;left:259px;top:641px;" width="17" height="17" viewBox="0 0 17 17"><path d="M8.5 4 V15 M4 8.5 L8.5 4 L13 8.5" fill="none" stroke="#1a5aa8" stroke-width="2.2"/></svg>
<div style="position:absolute;left:224px;top:668px;width:25px;height:25px;border:2px solid #f4f4f4;background:#dedede;"></div>
<svg style="position:absolute;left:228px;top:672px;" width="17" height="17" viewBox="0 0 17 17"><path d="M3 8.5 H14 M7.5 4 L3 8.5 L7.5 13" fill="none" stroke="#1a5aa8" stroke-width="2.2"/></svg>
<div style="position:absolute;left:286px;top:668px;width:25px;height:25px;border:2px solid #f4f4f4;background:#dedede;"></div>
<svg style="position:absolute;left:290px;top:672px;" width="17" height="17" viewBox="0 0 17 17"><path d="M3 8.5 H14 M9.5 4 L14 8.5 L9.5 13" fill="none" stroke="#1a5aa8" stroke-width="2.2"/></svg>
<div style="position:absolute;left:255px;top:699px;width:25px;height:25px;border:2px solid #f4f4f4;background:#dedede;"></div>
<svg style="position:absolute;left:259px;top:703px;" width="17" height="17" viewBox="0 0 17 17"><path d="M8.5 2 V13 M4 8.5 L8.5 13 L13 8.5" fill="none" stroke="#1a5aa8" stroke-width="2.2"/></svg>
<div style="position:absolute;left:396px;top:109px;width:352px;height:696px;background:#f0f0f0;"></div>
<div style="position:absolute;left:396px;top:109px;width:352px;height:19px;background:#dcdcdc;"></div>
<div style="position:absolute;left:398px;top:111px;width:49px;height:18px;background:#ebebeb;border-right:1px solid #f8f8f8;"></div>
<div style="position:absolute;left:448px;top:111px;width:57px;height:18px;background:#ebebeb;"></div>
<div style="position:absolute;left:505px;top:109px;width:47px;height:20px;background:#f8f8f8;"></div>
<div style="position:absolute;left:554px;top:111px;width:56px;height:18px;background:#ebebeb;"></div>
<div style="position:absolute;left:403.5px;top:114.65px;font-family:'Liberation Sans';font-size:11px;color:#1a1a1a;white-space:pre;line-height:1;transform:scaleX(0.9155);transform-origin:0 0;">Controls</div>
<div style="position:absolute;left:454.5px;top:114.65px;font-family:'Liberation Sans';font-size:11px;color:#1a1a1a;white-space:pre;line-height:1;transform:scaleX(0.9075);transform-origin:0 0;">Properties</div>
<div style="position:absolute;left:513.5px;top:113.15px;font-family:'Liberation Sans';font-size:11px;color:#1a1a1a;white-space:pre;line-height:1;transform:scaleX(0.9516);transform-origin:0 0;">Events</div>
<div style="position:absolute;left:558.5px;top:114.65px;font-family:'Liberation Sans';font-size:11px;color:#1a1a1a;white-space:pre;line-height:1;transform:scaleX(0.9913);transform-origin:0 0;">Advanced</div>
<div style="position:absolute;left:398px;top:128px;width:350px;height:2px;background:#f8f8f8;"></div>
<div style="position:absolute;left:400px;top:130px;width:327px;height:660px;background:#dcdcdc;"></div>
<div style="position:absolute;left:400px;top:130px;width:327px;height:22px;background:#fff;"></div>
<div style="position:absolute;left:400px;top:130px;width:25px;height:660px;background:#fff;"></div>
<div style="position:absolute;left:400px;top:790px;width:327px;height:12px;background:#ababab;"></div>
<svg style="position:absolute;left:400px;top:130px" width="328" height="661">
<path d="M25 22.5 H327 M25 44.5 H327 M25 66.5 H327 M25 88.5 H327 M25 110.5 H327 M25 132.5 H327 M25 154.5 H327 M25 176.5 H327 M25 198.5 H327 M25 220.5 H327 M25 242.5 H327 M25 264.5 H327 M25 286.5 H327 M25 308.5 H327 M25 330.5 H327 M25 352.5 H327 M25 374.5 H327 M25 396.5 H327 M25 418.5 H327 M25 440.5 H327 M25 462.5 H327 M25 484.5 H327 M25 506.5 H327 M25 528.5 H327 M25 550.5 H327 M25 572.5 H327 M25 594.5 H327 M25 616.5 H327 M25 638.5 H327 M25 660.5 H327" stroke="#a0a0a0" stroke-width="1"/>
<path d="M0 44.5 H25 M0 66.5 H25 M0 88.5 H25 M0 110.5 H25 M0 132.5 H25 M0 154.5 H25 M0 176.5 H25 M0 198.5 H25 M0 220.5 H25 M0 242.5 H25 M0 264.5 H25 M0 286.5 H25 M0 308.5 H25 M0 330.5 H25 M0 352.5 H25 M0 374.5 H25 M0 396.5 H25 M0 418.5 H25 M0 440.5 H25 M0 462.5 H25 M0 484.5 H25 M0 506.5 H25 M0 528.5 H25 M0 550.5 H25 M0 572.5 H25 M0 594.5 H25 M0 616.5 H25 M0 638.5 H25 M0 660.5 H25" stroke="#e8e8e8" stroke-width="1"/>
<path d="M0 22.5 H327 M0.5 0 V660 M0 0.5 H327 M24.5 0 V660 M194.5 22 V660 M326.5 0 V660" stroke="#a0a0a0" stroke-width="1"/><path d="M194.5 1 V22" stroke="#d0d0d0" stroke-width="1"/>
</svg>
<div style="position:absolute;left:432.3px;top:136.03px;font-family:'Liberation Sans';font-size:11.5px;color:#0a0a0a;white-space:pre;line-height:1;transform:scaleX(0.9011);transform-origin:0 0;">Event</div>
<div style="position:absolute;left:602.2px;top:136.03px;font-family:'Liberation Sans';font-size:11.5px;color:#0a0a0a;white-space:pre;line-height:1;transform:scaleX(0.8939);transform-origin:0 0;">Handler</div>
<div style="position:absolute;left:427.9px;top:158.27px;font-family:'Liberation Sans';font-size:10.5px;color:#0a0a0a;white-space:pre;line-height:1;transform:scaleX(0.9750);transform-origin:0 0;">Enter</div>
<div style="position:absolute;left:427.9px;top:180.27px;font-family:'Liberation Sans';font-size:10.5px;color:#0a0a0a;white-space:pre;line-height:1;transform:scaleX(0.9750);transform-origin:0 0;">GotFocus</div>
<div style="position:absolute;left:427.9px;top:202.27px;font-family:'Liberation Sans';font-size:10.5px;color:#0a0a0a;white-space:pre;line-height:1;transform:scaleX(0.9750);transform-origin:0 0;">KeyDown</div>
<div style="position:absolute;left:427.9px;top:224.27px;font-family:'Liberation Sans';font-size:10.5px;color:#0a0a0a;white-space:pre;line-height:1;transform:scaleX(0.9750);transform-origin:0 0;">KeyPress</div>
<div style="position:absolute;left:427.9px;top:246.27px;font-family:'Liberation Sans';font-size:10.5px;color:#0a0a0a;white-space:pre;line-height:1;transform:scaleX(0.9750);transform-origin:0 0;">KeyUp</div>
<div style="position:absolute;left:427.9px;top:268.27px;font-family:'Liberation Sans';font-size:10.5px;color:#0a0a0a;white-space:pre;line-height:1;transform:scaleX(0.9750);transform-origin:0 0;">Layout</div>
<div style="position:absolute;left:427.9px;top:290.27px;font-family:'Liberation Sans';font-size:10.5px;color:#0a0a0a;white-space:pre;line-height:1;transform:scaleX(0.9750);transform-origin:0 0;">Leave</div>
<div style="position:absolute;left:427.9px;top:312.27px;font-family:'Liberation Sans';font-size:10.5px;color:#0a0a0a;white-space:pre;line-height:1;transform:scaleX(0.9750);transform-origin:0 0;">LostFocus</div>
<div style="position:absolute;left:427.9px;top:334.27px;font-family:'Liberation Sans';font-size:10.5px;color:#0a0a0a;white-space:pre;line-height:1;transform:scaleX(0.9750);transform-origin:0 0;">MouseClick</div>
<div style="position:absolute;left:427.9px;top:356.27px;font-family:'Liberation Sans';font-size:10.5px;color:#0a0a0a;white-space:pre;line-height:1;transform:scaleX(0.9750);transform-origin:0 0;">MouseCaptureChanged</div>
<div style="position:absolute;left:427.9px;top:378.27px;font-family:'Liberation Sans';font-size:10.5px;color:#0a0a0a;white-space:pre;line-height:1;transform:scaleX(0.9750);transform-origin:0 0;">MouseDown</div>
<div style="position:absolute;left:597.9px;top:378.27px;font-family:'Liberation Sans';font-size:10.5px;color:#0a0a0a;white-space:pre;line-height:1;transform:scaleX(0.9750);transform-origin:0 0;">Button_0_MouseDown</div>
<div style="position:absolute;left:427.9px;top:400.27px;font-family:'Liberation Sans';font-size:10.5px;color:#0a0a0a;white-space:pre;line-height:1;transform:scaleX(0.9750);transform-origin:0 0;">MouseEnter</div>
<div style="position:absolute;left:427.9px;top:422.27px;font-family:'Liberation Sans';font-size:10.5px;color:#0a0a0a;white-space:pre;line-height:1;transform:scaleX(0.9750);transform-origin:0 0;">MouseLeave</div>
<div style="position:absolute;left:427.9px;top:444.27px;font-family:'Liberation Sans';font-size:10.5px;color:#0a0a0a;white-space:pre;line-height:1;transform:scaleX(0.9750);transform-origin:0 0;">DpiChangedBeforeParent</div>
<div style="position:absolute;left:427.9px;top:466.27px;font-family:'Liberation Sans';font-size:10.5px;color:#0a0a0a;white-space:pre;line-height:1;transform:scaleX(0.9750);transform-origin:0 0;">DpiChangedAfterParent</div>
<div style="position:absolute;left:427.9px;top:488.27px;font-family:'Liberation Sans';font-size:10.5px;color:#0a0a0a;white-space:pre;line-height:1;transform:scaleX(0.9750);transform-origin:0 0;">MouseHover</div>
<div style="position:absolute;left:427.9px;top:510.28px;font-family:'Liberation Sans';font-size:10.5px;color:#0a0a0a;white-space:pre;line-height:1;transform:scaleX(0.9750);transform-origin:0 0;">MouseMove</div>
<div style="position:absolute;left:597.9px;top:510.28px;font-family:'Liberation Sans';font-size:10.5px;color:#0a0a0a;white-space:pre;line-height:1;transform:scaleX(0.9750);transform-origin:0 0;">Button_0_MouseMove</div>
<div style="position:absolute;left:427.9px;top:532.28px;font-family:'Liberation Sans';font-size:10.5px;color:#0a0a0a;white-space:pre;line-height:1;transform:scaleX(0.9750);transform-origin:0 0;">MouseUp</div>
<div style="position:absolute;left:597.9px;top:532.28px;font-family:'Liberation Sans';font-size:10.5px;color:#0a0a0a;white-space:pre;line-height:1;transform:scaleX(0.9750);transform-origin:0 0;">Button_0_MouseUp</div>
<div style="position:absolute;left:427.9px;top:554.28px;font-family:'Liberation Sans';font-size:10.5px;color:#0a0a0a;white-space:pre;line-height:1;transform:scaleX(0.9750);transform-origin:0 0;">MouseWheel</div>
<div style="position:absolute;left:427.9px;top:576.28px;font-family:'Liberation Sans';font-size:10.5px;color:#0a0a0a;white-space:pre;line-height:1;transform:scaleX(0.9750);transform-origin:0 0;">Move</div>
<div style="position:absolute;left:427.9px;top:598.28px;font-family:'Liberation Sans';font-size:10.5px;color:#0a0a0a;white-space:pre;line-height:1;transform:scaleX(0.9750);transform-origin:0 0;">PreviewKeyDown</div>
<div style="position:absolute;left:427.9px;top:620.28px;font-family:'Liberation Sans';font-size:10.5px;color:#0a0a0a;white-space:pre;line-height:1;transform:scaleX(0.9750);transform-origin:0 0;">Resize</div>
<div style="position:absolute;left:427.9px;top:642.28px;font-family:'Liberation Sans';font-size:10.5px;color:#0a0a0a;white-space:pre;line-height:1;transform:scaleX(0.9750);transform-origin:0 0;">ChangeUICues</div>
<div style="position:absolute;left:427.9px;top:664.28px;font-family:'Liberation Sans';font-size:10.5px;color:#0a0a0a;white-space:pre;line-height:1;transform:scaleX(0.9750);transform-origin:0 0;">StyleChanged</div>
<div style="position:absolute;left:427.9px;top:686.28px;font-family:'Liberation Sans';font-size:10.5px;color:#0a0a0a;white-space:pre;line-height:1;transform:scaleX(0.9750);transform-origin:0 0;">SystemColorsChanged</div>
<div style="position:absolute;left:427.9px;top:708.28px;font-family:'Liberation Sans';font-size:10.5px;color:#0a0a0a;white-space:pre;line-height:1;transform:scaleX(0.9750);transform-origin:0 0;">Validating</div>
<div style="position:absolute;left:427.9px;top:730.28px;font-family:'Liberation Sans';font-size:10.5px;color:#0a0a0a;white-space:pre;line-height:1;transform:scaleX(0.9750);transform-origin:0 0;">Validated</div>
<div style="position:absolute;left:427.9px;top:752.28px;font-family:'Liberation Sans';font-size:10.5px;color:#0a0a0a;white-space:pre;line-height:1;transform:scaleX(0.9750);transform-origin:0 0;">ParentChanged</div>
<div style="position:absolute;left:427.9px;top:774.28px;font-family:'Liberation Sans';font-size:10.5px;color:#0a0a0a;white-space:pre;line-height:1;transform:scaleX(0.9750);transform-origin:0 0;">Disposed</div>
<div style="position:absolute;left:735px;top:520px;width:2px;height:265px;background:#808080;"></div>
<div style="position:absolute;left:745px;top:128px;width:3px;height:677px;background:#fbfbfb;"></div>
<div style="position:absolute;left:751px;top:54px;width:596px;height:755px;background:#c0c0c0;"></div>
<div style="position:absolute;left:751px;top:54px;width:596px;height:28px;background:#c8c8c8;"></div>
<svg style="position:absolute;left:758px;top:62px;" width="16" height="16" viewBox="0 0 16 16"><defs><linearGradient id="vsg" x1="0" y1="0" x2="1" y2="1"><stop offset="0" stop-color="#6a58c8"/><stop offset="1" stop-color="#b88ef0"/></linearGradient></defs><path d="M0.5 4.5 L4 2 L8 6.5 L12 1.5 L15.5 3.5 V12.5 L12 14.5 L8 9.5 L4 14 L0.5 11.5 Z" fill="url(#vsg)"/><path d="M0.5 4.5 L4 2 L8 6.5 L8 9.5 L4 14 L0.5 11.5 Z" fill="#5a4cb8"/><path d="M3 6.5 L5 8 L3 9.5 Z" fill="#e8e0f8"/><path d="M12.5 5.5 V10.5 L10 8 Z" fill="#f0e8fc"/></svg>
<div style="position:absolute;left:780px;top:63.90px;font-family:'Liberation Sans';font-size:16px;color:#7a7a7a;white-space:pre;line-height:1;transform:scaleX(1.0058);transform-origin:0 0;">[0] Script</div>
<div style="position:absolute;left:1261px;top:72px;width:13px;height:3px;background:#6a6a6a;"></div>
<div style="position:absolute;left:1291px;top:63px;width:12px;height:12px;border:2px solid #6a6a6a;border-top-width:3px;"></div>
<div style="position:absolute;left:1322px;top:61.15px;font-family:'Liberation Sans';font-size:17px;color:#6a6a6a;white-space:pre;line-height:1;font-weight:bold;transform:scaleX(1.0142);transform-origin:0 0;">X</div>
<div style="position:absolute;left:754px;top:82px;width:590px;height:25px;background:#e0e0e0;"></div>
<svg style="position:absolute;left:759px;top:87px;" width="16" height="16" viewBox="0 0 16 16"><path d="M4.5 4.5 V15.5 H14.5 V6 L11 2.5 H7" fill="#fafafa" stroke="#262626" stroke-width="1"/><path d="M11 2.5 V6 H14.5" fill="none" stroke="#262626"/><g stroke="#f0a030" stroke-width="1"><path d="M3.5 0.5 V6.5 M0.5 3.5 H6.5 M1.3 1.3 L5.7 5.7 M5.7 1.3 L1.3 5.7"/></g><circle cx="3.5" cy="3.5" r="1.2" fill="#fff3c0"/></svg>
<div style="position:absolute;left:782px;top:84px;width:119px;height:22px;background:#dcdcdc;border:1px solid #f2f2f2;"></div>
<div style="position:absolute;left:888px;top:85px;width:12px;height:20px;background:#f0f0f0;"></div>
<svg style="position:absolute;left:891px;top:93px;" width="6" height="4" viewBox="0 0 6 4"><path d="M0 0 H6 L3 3.5 Z" fill="#000"/></svg>
<div style="position:absolute;left:785.5px;top:90.38px;font-family:'Liberation Sans';font-size:12.5px;color:#1a1a1a;white-space:pre;line-height:1;transform:scaleX(0.9048);transform-origin:0 0;">C# - C Sharp</div>
<div style="position:absolute;left:903px;top:84px;width:75px;height:22px;background:#dcdcdc;border:1px solid #f2f2f2;"></div>
<div style="position:absolute;left:965px;top:85px;width:12px;height:20px;background:#f0f0f0;"></div>
<svg style="position:absolute;left:968px;top:93px;" width="6" height="4" viewBox="0 0 6 4"><path d="M0 0 H6 L3 3.5 Z" fill="#000"/></svg>
<div style="position:absolute;left:907px;top:90.38px;font-family:'Liberation Sans';font-size:12.5px;color:#1a1a1a;white-space:pre;line-height:1;transform:scaleX(0.9283);transform-origin:0 0;">Dark</div>
<div style="position:absolute;left:983px;top:86px;width:2px;height:17px;background:#c8c8c8;border-right:1px solid #f4f4f4;"></div>
<div style="position:absolute;left:1150px;top:86px;width:2px;height:17px;background:#c8c8c8;border-right:1px solid #f4f4f4;"></div>
<svg style="position:absolute;left:988px;top:87px;" width="16" height="16" viewBox="0 0 16 16"><rect x="0" y="1" width="14" height="2" fill="#1a9a30"/><rect x="0" y="5" width="10" height="2" fill="#1a9a30"/><rect x="0" y="9" width="14" height="2" fill="#1a9a30"/><rect x="0" y="13" width="6" height="2" fill="#1a9a30"/></svg>
<svg style="position:absolute;left:1011px;top:87px;" width="16" height="16" viewBox="0 0 16 16"><rect x="0" y="1" width="14" height="2" fill="#262626"/><rect x="0" y="5" width="11" height="2" fill="#262626"/><rect x="0" y="9" width="14" height="2" fill="#262626"/><rect x="0" y="13" width="6" height="2" fill="#262626"/></svg>
<svg style="position:absolute;left:1034px;top:87px;" width="16" height="16" viewBox="0 0 16 16"><rect x="6" y="1.5" width="8" height="1.5" fill="#262626"/><rect x="6" y="13" width="8" height="1.5" fill="#262626"/><rect x="0" y="7" width="3" height="2" fill="#262626"/><path d="M14 8 H5 M8 5 L5 8 L8 11" fill="none" stroke="#1a6ac0" stroke-width="1.4"/></svg>
<svg style="position:absolute;left:1057px;top:87px;" width="16" height="16" viewBox="0 0 16 16"><rect x="0" y="1.5" width="8" height="1.5" fill="#1a6ac0"/><rect x="0" y="13" width="8" height="1.5" fill="#1a6ac0"/><rect x="11" y="7" width="5" height="2" fill="#262626"/><path d="M0 8 H9 M6 5 L9 8 L6 11" fill="none" stroke="#1a6ac0" stroke-width="1.4"/><rect x="10" y="4" width="6" height="1.5" fill="#262626"/><rect x="10" y="10.5" width="6" height="1.5" fill="#262626"/></svg>
<svg style="position:absolute;left:1080px;top:87px;" width="16" height="16" viewBox="0 0 16 16"><circle cx="6.5" cy="6.5" r="5.3" fill="#f8f8f8" stroke="#262626" stroke-width="1.3"/><path d="M10.3 10.3 L15 15" stroke="#262626" stroke-width="1.8"/><path d="M4 6.5 H9 M6.5 4 V9" stroke="#1a5a9a" stroke-width="1.3"/></svg>
<svg style="position:absolute;left:1103px;top:87px;" width="16" height="16" viewBox="0 0 16 16"><circle cx="6.5" cy="6.5" r="5.3" fill="#f8f8f8" stroke="#262626" stroke-width="1.3"/><path d="M10.3 10.3 L15 15" stroke="#262626" stroke-width="1.8"/><path d="M4 6.5 H9" stroke="#262626" stroke-width="1.3"/></svg>
<svg style="position:absolute;left:1127px;top:87px;" width="16" height="16" viewBox="0 0 16 16"><path d="M1 2 V14 M3 0.5 H12 M15 2 V11" stroke="#262626" stroke-width="1"/><circle cx="7.5" cy="7.5" r="4.5" fill="#f8f8f8" stroke="#262626" stroke-width="1.3"/><path d="M5.3 7.5 H9.7 M7.5 5.3 V9.7" stroke="#262626" stroke-width="1.2"/><path d="M10.5 10.5 L15 15" stroke="#262626" stroke-width="1.6"/></svg>
<svg style="position:absolute;left:1162px;top:88px;" width="15" height="15" viewBox="0 0 16 16"><path d="M1.5 8 L5.5 12 L14 3.5" fill="none" stroke="#3a9a3a" stroke-width="2.4"/></svg>
<div style="position:absolute;left:1182.5px;top:89.38px;font-family:'Liberation Sans';font-size:12.5px;color:#1a1a1a;white-space:pre;line-height:1;transform:scaleX(0.9814);transform-origin:0 0;">Compile</div>
<svg style="position:absolute;left:1238px;top:88px;" width="15" height="15" viewBox="0 0 16 16"><path d="M2 1 L11 8 L2 15 Z" fill="#a8a8a8"/></svg>
<div style="position:absolute;left:1255px;top:89.38px;font-family:'Liberation Sans';font-size:12.5px;color:#8a8a8a;white-space:pre;line-height:1;transform:scaleX(0.8504);transform-origin:0 0;">Run</div>
<div style="position:absolute;left:1306.5px;top:89.38px;font-family:'Liberation Sans';font-size:12.5px;color:#1a1a1a;white-space:pre;line-height:1;transform:scaleX(1.0069);transform-origin:0 0;">0</div>
<div style="position:absolute;left:754px;top:107px;width:590px;height:669px;background:#1e1e1e;"></div>
<div style="position:absolute;left:754px;top:107px;width:590px;height:18px;background:#202020;"></div>
<div style="position:absolute;left:754px;top:125px;width:590px;height:2px;background:#0e0e0e;"></div>
<div style="position:absolute;left:1331px;top:107px;width:1px;height:669px;background:#303030;"></div>
<div style="position:absolute;left:1332px;top:272px;width:12px;height:2px;background:#707070;"></div>
<div style="position:absolute;left:818px;top:416px;width:526px;height:17px;border-top:1px solid #2e2e2e;border-bottom:1px solid #2e2e2e;"></div>
<div style="position:absolute;left:817px;top:127px;width:1px;height:649px;background:#404040;"></div>
<div style="position:absolute;left:848.6400000000001px;top:320.5px;width:1px;height:247.0px;background:#404040;"></div>
<div style="position:absolute;left:848.6400000000001px;top:643.5px;width:1px;height:133.0px;background:#404040;"></div>
<div style="position:absolute;left:879.48px;top:377.5px;width:1px;height:57.0px;background:#404040;"></div>
<div style="position:absolute;left:879.48px;top:491.5px;width:1px;height:57.0px;background:#404040;"></div>
<div style="position:absolute;left:879.48px;top:700.5px;width:1px;height:57.0px;background:#404040;"></div>
<div style="position:absolute;left:754px;top:107px;width:590px;height:669px;overflow:hidden">
<div style="position:absolute;left:0;width:36.799999999999955px;top:5.73px;text-align:right;font-family:'Liberation Mono';font-size:12.85px;line-height:1;color:#9a9a9a;white-space:pre">8</div>
<div style="position:absolute;left:62.60000000000002px;top:5.73px;font-family:'Liberation Mono';font-size:12.85px;line-height:1;white-space:pre"><span style="color:#569cd6;-webkit-text-stroke:0.3px #569cd6">public</span><span style="color:#dcdcdc;-webkit-text-stroke:0.3px #dcdcdc"> </span><span style="color:#569cd6;-webkit-text-stroke:0.3px #569cd6">class</span><span style="color:#dcdcdc;-webkit-text-stroke:0.3px #dcdcdc"> MainClass</span><span style="color:#ffd700;-webkit-text-stroke:0.3px #ffd700">{</span></div>
<div style="position:absolute;left:0;width:36.799999999999955px;top:28.23px;text-align:right;font-family:'Liberation Mono';font-size:12.85px;line-height:1;color:#9a9a9a;white-space:pre">12</div>
<div style="position:absolute;left:62.60000000000002px;top:28.23px;font-family:'Liberation Mono';font-size:12.85px;line-height:1;white-space:pre"></div>
<div style="position:absolute;left:0;width:36.799999999999955px;top:47.23px;text-align:right;font-family:'Liberation Mono';font-size:12.85px;line-height:1;color:#9a9a9a;white-space:pre">13</div>
<div style="position:absolute;left:62.60000000000002px;top:47.23px;font-family:'Liberation Mono';font-size:12.85px;line-height:1;white-space:pre"><span style="color:#dcdcdc;-webkit-text-stroke:0.3px #dcdcdc">    </span><span style="color:#569cd6;-webkit-text-stroke:0.3px #569cd6">int</span><span style="color:#dcdcdc;-webkit-text-stroke:0.3px #dcdcdc"> ResizeBorderSize = </span><span style="color:#b5cea8;-webkit-text-stroke:0.3px #b5cea8">5</span><span style="color:#dcdcdc;-webkit-text-stroke:0.3px #dcdcdc">;</span></div>
<div style="position:absolute;left:0;width:36.799999999999955px;top:66.23px;text-align:right;font-family:'Liberation Mono';font-size:12.85px;line-height:1;color:#9a9a9a;white-space:pre">14</div>
<div style="position:absolute;left:62.60000000000002px;top:66.23px;font-family:'Liberation Mono';font-size:12.85px;line-height:1;white-space:pre"><span style="color:#dcdcdc;-webkit-text-stroke:0.3px #dcdcdc">    </span><span style="color:#569cd6;-webkit-text-stroke:0.3px #569cd6">bool</span><span style="color:#dcdcdc;-webkit-text-stroke:0.3px #dcdcdc"> IsResizing = </span><span style="color:#569cd6;-webkit-text-stroke:0.3px #569cd6">false</span><span style="color:#dcdcdc;-webkit-text-stroke:0.3px #dcdcdc">;</span></div>
<div style="position:absolute;left:0;width:36.799999999999955px;top:85.23px;text-align:right;font-family:'Liberation Mono';font-size:12.85px;line-height:1;color:#9a9a9a;white-space:pre">15</div>
<div style="position:absolute;left:62.60000000000002px;top:85.23px;font-family:'Liberation Mono';font-size:12.85px;line-height:1;white-space:pre"><span style="color:#dcdcdc;-webkit-text-stroke:0.3px #dcdcdc">    </span><span style="color:#569cd6;-webkit-text-stroke:0.3px #569cd6">bool</span><span style="color:#dcdcdc;-webkit-text-stroke:0.3px #dcdcdc"> IsDragging = </span><span style="color:#569cd6;-webkit-text-stroke:0.3px #569cd6">false</span><span style="color:#dcdcdc;-webkit-text-stroke:0.3px #dcdcdc">;</span></div>
<div style="position:absolute;left:0;width:36.799999999999955px;top:104.23px;text-align:right;font-family:'Liberation Mono';font-size:12.85px;line-height:1;color:#9a9a9a;white-space:pre">16</div>
<div style="position:absolute;left:62.60000000000002px;top:104.23px;font-family:'Liberation Mono';font-size:12.85px;line-height:1;white-space:pre"><span style="color:#dcdcdc;-webkit-text-stroke:0.3px #dcdcdc">    Point StartMousePosition;</span></div>
<div style="position:absolute;left:0;width:36.799999999999955px;top:123.23px;text-align:right;font-family:'Liberation Mono';font-size:12.85px;line-height:1;color:#9a9a9a;white-space:pre">17</div>
<div style="position:absolute;left:62.60000000000002px;top:123.23px;font-family:'Liberation Mono';font-size:12.85px;line-height:1;white-space:pre"><span style="color:#dcdcdc;-webkit-text-stroke:0.3px #dcdcdc">    Size OriginalSize;</span></div>
<div style="position:absolute;left:0;width:36.799999999999955px;top:142.23px;text-align:right;font-family:'Liberation Mono';font-size:12.85px;line-height:1;color:#9a9a9a;white-space:pre">18</div>
<div style="position:absolute;left:62.60000000000002px;top:142.23px;font-family:'Liberation Mono';font-size:12.85px;line-height:1;white-space:pre"><span style="color:#dcdcdc;-webkit-text-stroke:0.3px #dcdcdc">    Point OriginalLocation;</span></div>
<div style="position:absolute;left:0;width:36.799999999999955px;top:161.23px;text-align:right;font-family:'Liberation Mono';font-size:12.85px;line-height:1;color:#9a9a9a;white-space:pre">19</div>
<div style="position:absolute;left:62.60000000000002px;top:161.23px;font-family:'Liberation Mono';font-size:12.85px;line-height:1;white-space:pre"></div>
<div style="position:absolute;left:0;width:36.799999999999955px;top:180.23px;text-align:right;font-family:'Liberation Mono';font-size:12.85px;line-height:1;color:#9a9a9a;white-space:pre">20</div>
<div style="position:absolute;left:62.60000000000002px;top:180.23px;font-family:'Liberation Mono';font-size:12.85px;line-height:1;white-space:pre"><span style="color:#dcdcdc;-webkit-text-stroke:0.3px #dcdcdc">    </span><span style="color:#569cd6;-webkit-text-stroke:0.3px #569cd6">public</span><span style="color:#dcdcdc;-webkit-text-stroke:0.3px #dcdcdc"> </span><span style="color:#569cd6;-webkit-text-stroke:0.3px #569cd6">void</span><span style="color:#dcdcdc;-webkit-text-stroke:0.3px #dcdcdc"> Button_0_MouseDown</span><span style="color:#da70d6;-webkit-text-stroke:0.3px #da70d6">(</span><span style="color:#dcdcdc;-webkit-text-stroke:0.3px #dcdcdc">Object sender, MouseEventArgs e</span><span style="color:#da70d6;-webkit-text-stroke:0.3px #da70d6">)</span></div>
<div style="position:absolute;left:0;width:36.799999999999955px;top:199.23px;text-align:right;font-family:'Liberation Mono';font-size:12.85px;line-height:1;color:#9a9a9a;white-space:pre">21</div>
<div style="position:absolute;left:62.60000000000002px;top:199.23px;font-family:'Liberation Mono';font-size:12.85px;line-height:1;white-space:pre"><span style="color:#dcdcdc;-webkit-text-stroke:0.3px #dcdcdc">    </span><span style="color:#da70d6;-webkit-text-stroke:0.3px #da70d6">{</span></div>
<div style="position:absolute;left:0;width:36.799999999999955px;top:218.23px;text-align:right;font-family:'Liberation Mono';font-size:12.85px;line-height:1;color:#9a9a9a;white-space:pre">22</div>
<div style="position:absolute;left:62.60000000000002px;top:218.23px;font-family:'Liberation Mono';font-size:12.85px;line-height:1;white-space:pre"><span style="color:#dcdcdc;-webkit-text-stroke:0.3px #dcdcdc">        Button btn = sender </span><span style="color:#569cd6;-webkit-text-stroke:0.3px #569cd6">as</span><span style="color:#dcdcdc;-webkit-text-stroke:0.3px #dcdcdc"> Button;</span></div>
<div style="position:absolute;left:0;width:36.799999999999955px;top:237.23px;text-align:right;font-family:'Liberation Mono';font-size:12.85px;line-height:1;color:#9a9a9a;white-space:pre">23</div>
<div style="position:absolute;left:62.60000000000002px;top:237.23px;font-family:'Liberation Mono';font-size:12.85px;line-height:1;white-space:pre"><span style="color:#dcdcdc;-webkit-text-stroke:0.3px #dcdcdc">        </span><span style="color:#569cd6;-webkit-text-stroke:0.3px #569cd6">if</span><span style="color:#dcdcdc;-webkit-text-stroke:0.3px #dcdcdc"> </span><span style="color:#179fff;-webkit-text-stroke:0.3px #179fff">(</span><span style="color:#dcdcdc;-webkit-text-stroke:0.3px #dcdcdc">IsInResizeZone</span><span style="color:#ffd700;-webkit-text-stroke:0.3px #ffd700">(</span><span style="color:#dcdcdc;-webkit-text-stroke:0.3px #dcdcdc">btn, e.Location</span><span style="color:#ffd700;-webkit-text-stroke:0.3px #ffd700">)</span><span style="color:#179fff;-webkit-text-stroke:0.3px #179fff">)</span></div>
<div style="position:absolute;left:0;width:36.799999999999955px;top:256.23px;text-align:right;font-family:'Liberation Mono';font-size:12.85px;line-height:1;color:#9a9a9a;white-space:pre">24</div>
<div style="position:absolute;left:62.60000000000002px;top:256.23px;font-family:'Liberation Mono';font-size:12.85px;line-height:1;white-space:pre"><span style="color:#dcdcdc;-webkit-text-stroke:0.3px #dcdcdc">        </span><span style="color:#179fff;-webkit-text-stroke:0.3px #179fff">{</span></div>
<div style="position:absolute;left:0;width:36.799999999999955px;top:275.23px;text-align:right;font-family:'Liberation Mono';font-size:12.85px;line-height:1;color:#9a9a9a;white-space:pre">25</div>
<div style="position:absolute;left:62.60000000000002px;top:275.23px;font-family:'Liberation Mono';font-size:12.85px;line-height:1;white-space:pre"><span style="color:#dcdcdc;-webkit-text-stroke:0.3px #dcdcdc">            IsResizing = </span><span style="color:#569cd6;-webkit-text-stroke:0.3px #569cd6">true</span><span style="color:#dcdcdc;-webkit-text-stroke:0.3px #dcdcdc">;</span></div>
<div style="position:absolute;left:0;width:36.799999999999955px;top:294.23px;text-align:right;font-family:'Liberation Mono';font-size:12.85px;line-height:1;color:#9a9a9a;white-space:pre">26</div>
<div style="position:absolute;left:62.60000000000002px;top:294.23px;font-family:'Liberation Mono';font-size:12.85px;line-height:1;white-space:pre"><span style="color:#dcdcdc;-webkit-text-stroke:0.3px #dcdcdc">            StartMousePosition = e.Location;</span></div>
<div style="position:absolute;left:0;width:36.799999999999955px;top:313.23px;text-align:right;font-family:'Liberation Mono';font-size:12.85px;line-height:1;color:#c6c6c6;white-space:pre">27</div>
<div style="position:absolute;left:62.60000000000002px;top:313.23px;font-family:'Liberation Mono';font-size:12.85px;line-height:1;white-space:pre"><span style="color:#dcdcdc;-webkit-text-stroke:0.3px #dcdcdc">            OriginalSize = btn.Size;</span></div>
<div style="position:absolute;left:0;width:36.799999999999955px;top:332.23px;text-align:right;font-family:'Liberation Mono';font-size:12.85px;line-height:1;color:#9a9a9a;white-space:pre">28</div>
<div style="position:absolute;left:62.60000000000002px;top:332.23px;font-family:'Liberation Mono';font-size:12.85px;line-height:1;white-space:pre"><span style="color:#dcdcdc;-webkit-text-stroke:0.3px #dcdcdc">        </span><span style="color:#179fff;-webkit-text-stroke:0.3px #179fff">}</span></div>
<div style="position:absolute;left:0;width:36.799999999999955px;top:351.23px;text-align:right;font-family:'Liberation Mono';font-size:12.85px;line-height:1;color:#9a9a9a;white-space:pre">29</div>
<div style="position:absolute;left:62.60000000000002px;top:351.23px;font-family:'Liberation Mono';font-size:12.85px;line-height:1;white-space:pre"><span style="color:#dcdcdc;-webkit-text-stroke:0.3px #dcdcdc">        </span><span style="color:#569cd6;-webkit-text-stroke:0.3px #569cd6">else</span></div>
<div style="position:absolute;left:0;width:36.799999999999955px;top:370.23px;text-align:right;font-family:'Liberation Mono';font-size:12.85px;line-height:1;color:#9a9a9a;white-space:pre">30</div>
<div style="position:absolute;left:62.60000000000002px;top:370.23px;font-family:'Liberation Mono';font-size:12.85px;line-height:1;white-space:pre"><span style="color:#dcdcdc;-webkit-text-stroke:0.3px #dcdcdc">        </span><span style="color:#179fff;-webkit-text-stroke:0.3px #179fff">{</span></div>
<div style="position:absolute;left:0;width:36.799999999999955px;top:389.23px;text-align:right;font-family:'Liberation Mono';font-size:12.85px;line-height:1;color:#9a9a9a;white-space:pre">31</div>
<div style="position:absolute;left:62.60000000000002px;top:389.23px;font-family:'Liberation Mono';font-size:12.85px;line-height:1;white-space:pre"><span style="color:#dcdcdc;-webkit-text-stroke:0.3px #dcdcdc">            IsDragging = </span><span style="color:#569cd6;-webkit-text-stroke:0.3px #569cd6">true</span><span style="color:#dcdcdc;-webkit-text-stroke:0.3px #dcdcdc">;</span></div>
<div style="position:absolute;left:0;width:36.799999999999955px;top:408.23px;text-align:right;font-family:'Liberation Mono';font-size:12.85px;line-height:1;color:#9a9a9a;white-space:pre">32</div>
<div style="position:absolute;left:62.60000000000002px;top:408.23px;font-family:'Liberation Mono';font-size:12.85px;line-height:1;white-space:pre"><span style="color:#dcdcdc;-webkit-text-stroke:0.3px #dcdcdc">            StartMousePosition = e.Location;</span></div>
<div style="position:absolute;left:0;width:36.799999999999955px;top:427.23px;text-align:right;font-family:'Liberation Mono';font-size:12.85px;line-height:1;color:#9a9a9a;white-space:pre">33</div>
<div style="position:absolute;left:62.60000000000002px;top:427.23px;font-family:'Liberation Mono';font-size:12.85px;line-height:1;white-space:pre"><span style="color:#dcdcdc;-webkit-text-stroke:0.3px #dcdcdc">            OriginalLocation = btn.Location;</span></div>
<div style="position:absolute;left:0;width:36.799999999999955px;top:446.23px;text-align:right;font-family:'Liberation Mono';font-size:12.85px;line-height:1;color:#9a9a9a;white-space:pre">34</div>
<div style="position:absolute;left:62.60000000000002px;top:446.23px;font-family:'Liberation Mono';font-size:12.85px;line-height:1;white-space:pre"><span style="color:#dcdcdc;-webkit-text-stroke:0.3px #dcdcdc">        </span><span style="color:#179fff;-webkit-text-stroke:0.3px #179fff">}</span></div>
<div style="position:absolute;left:0;width:36.799999999999955px;top:465.23px;text-align:right;font-family:'Liberation Mono';font-size:12.85px;line-height:1;color:#9a9a9a;white-space:pre">35</div>
<div style="position:absolute;left:62.60000000000002px;top:465.23px;font-family:'Liberation Mono';font-size:12.85px;line-height:1;white-space:pre"><span style="color:#dcdcdc;-webkit-text-stroke:0.3px #dcdcdc">    </span><span style="color:#da70d6;-webkit-text-stroke:0.3px #da70d6">}</span></div>
<div style="position:absolute;left:0;width:36.799999999999955px;top:484.23px;text-align:right;font-family:'Liberation Mono';font-size:12.85px;line-height:1;color:#9a9a9a;white-space:pre">36</div>
<div style="position:absolute;left:62.60000000000002px;top:484.23px;font-family:'Liberation Mono';font-size:12.85px;line-height:1;white-space:pre"></div>
<div style="position:absolute;left:0;width:36.799999999999955px;top:503.23px;text-align:right;font-family:'Liberation Mono';font-size:12.85px;line-height:1;color:#9a9a9a;white-space:pre">37</div>
<div style="position:absolute;left:62.60000000000002px;top:503.23px;font-family:'Liberation Mono';font-size:12.85px;line-height:1;white-space:pre"><span style="color:#dcdcdc;-webkit-text-stroke:0.3px #dcdcdc">    </span><span style="color:#569cd6;-webkit-text-stroke:0.3px #569cd6">public</span><span style="color:#dcdcdc;-webkit-text-stroke:0.3px #dcdcdc"> </span><span style="color:#569cd6;-webkit-text-stroke:0.3px #569cd6">void</span><span style="color:#dcdcdc;-webkit-text-stroke:0.3px #dcdcdc"> Button_0_MouseMove</span><span style="color:#da70d6;-webkit-text-stroke:0.3px #da70d6">(</span><span style="color:#dcdcdc;-webkit-text-stroke:0.3px #dcdcdc">Object sender, MouseEventArgs e</span><span style="color:#da70d6;-webkit-text-stroke:0.3px #da70d6">)</span></div>
<div style="position:absolute;left:0;width:36.799999999999955px;top:522.23px;text-align:right;font-family:'Liberation Mono';font-size:12.85px;line-height:1;color:#9a9a9a;white-space:pre">38</div>
<div style="position:absolute;left:62.60000000000002px;top:522.23px;font-family:'Liberation Mono';font-size:12.85px;line-height:1;white-space:pre"><span style="color:#dcdcdc;-webkit-text-stroke:0.3px #dcdcdc">    </span><span style="color:#da70d6;-webkit-text-stroke:0.3px #da70d6">{</span></div>
<div style="position:absolute;left:0;width:36.799999999999955px;top:541.23px;text-align:right;font-family:'Liberation Mono';font-size:12.85px;line-height:1;color:#9a9a9a;white-space:pre">39</div>
<div style="position:absolute;left:62.60000000000002px;top:541.23px;font-family:'Liberation Mono';font-size:12.85px;line-height:1;white-space:pre"><span style="color:#dcdcdc;-webkit-text-stroke:0.3px #dcdcdc">        Button btn = sender </span><span style="color:#569cd6;-webkit-text-stroke:0.3px #569cd6">as</span><span style="color:#dcdcdc;-webkit-text-stroke:0.3px #dcdcdc"> Button;</span></div>
<div style="position:absolute;left:0;width:36.799999999999955px;top:560.23px;text-align:right;font-family:'Liberation Mono';font-size:12.85px;line-height:1;color:#9a9a9a;white-space:pre">40</div>
<div style="position:absolute;left:62.60000000000002px;top:560.23px;font-family:'Liberation Mono';font-size:12.85px;line-height:1;white-space:pre"><span style="color:#dcdcdc;-webkit-text-stroke:0.3px #dcdcdc">        </span><span style="color:#569cd6;-webkit-text-stroke:0.3px #569cd6">if</span><span style="color:#dcdcdc;-webkit-text-stroke:0.3px #dcdcdc"> </span><span style="color:#179fff;-webkit-text-stroke:0.3px #179fff">(</span><span style="color:#dcdcdc;-webkit-text-stroke:0.3px #dcdcdc">IsResizing</span><span style="color:#179fff;-webkit-text-stroke:0.3px #179fff">)</span></div>
<div style="position:absolute;left:0;width:36.799999999999955px;top:579.23px;text-align:right;font-family:'Liberation Mono';font-size:12.85px;line-height:1;color:#9a9a9a;white-space:pre">41</div>
<div style="position:absolute;left:62.60000000000002px;top:579.23px;font-family:'Liberation Mono';font-size:12.85px;line-height:1;white-space:pre"><span style="color:#dcdcdc;-webkit-text-stroke:0.3px #dcdcdc">        </span><span style="color:#179fff;-webkit-text-stroke:0.3px #179fff">{</span></div>
<div style="position:absolute;left:0;width:36.799999999999955px;top:598.23px;text-align:right;font-family:'Liberation Mono';font-size:12.85px;line-height:1;color:#9a9a9a;white-space:pre">42</div>
<div style="position:absolute;left:62.60000000000002px;top:598.23px;font-family:'Liberation Mono';font-size:12.85px;line-height:1;white-space:pre"><span style="color:#dcdcdc;-webkit-text-stroke:0.3px #dcdcdc">            </span><span style="color:#569cd6;-webkit-text-stroke:0.3px #569cd6">int</span><span style="color:#dcdcdc;-webkit-text-stroke:0.3px #dcdcdc"> deltaX = e.X - StartMousePosition.X;</span></div>
<div style="position:absolute;left:0;width:36.799999999999955px;top:617.23px;text-align:right;font-family:'Liberation Mono';font-size:12.85px;line-height:1;color:#9a9a9a;white-space:pre">43</div>
<div style="position:absolute;left:62.60000000000002px;top:617.23px;font-family:'Liberation Mono';font-size:12.85px;line-height:1;white-space:pre"><span style="color:#dcdcdc;-webkit-text-stroke:0.3px #dcdcdc">            </span><span style="color:#569cd6;-webkit-text-stroke:0.3px #569cd6">int</span><span style="color:#dcdcdc;-webkit-text-stroke:0.3px #dcdcdc"> deltaY = e.Y - StartMousePosition.Y;</span></div>
<div style="position:absolute;left:0;width:36.799999999999955px;top:636.23px;text-align:right;font-family:'Liberation Mono';font-size:12.85px;line-height:1;color:#9a9a9a;white-space:pre">44</div>
<div style="position:absolute;left:62.60000000000002px;top:636.23px;font-family:'Liberation Mono';font-size:12.85px;line-height:1;white-space:pre"><span style="color:#dcdcdc;-webkit-text-stroke:0.3px #dcdcdc">            btn.Size = </span><span style="color:#569cd6;-webkit-text-stroke:0.3px #569cd6">new</span><span style="color:#dcdcdc;-webkit-text-stroke:0.3px #dcdcdc"> Size</span><span style="color:#ffd700;-webkit-text-stroke:0.3px #ffd700">(</span><span style="color:#dcdcdc;-webkit-text-stroke:0.3px #dcdcdc">OriginalSize.Width + deltaX, OriginalSize.Height + deltaY</span><span style="color:#ffd700;-webkit-text-stroke:0.3px #ffd700">)</span><span style="color:#dcdcdc;-webkit-text-stroke:0.3px #dcdcdc">;</span></div>
<div style="position:absolute;left:0;width:36.799999999999955px;top:655.23px;text-align:right;font-family:'Liberation Mono';font-size:12.85px;line-height:1;color:#9a9a9a;white-space:pre">45</div>
<div style="position:absolute;left:62.60000000000002px;top:655.23px;font-family:'Liberation Mono';font-size:12.85px;line-height:1;white-space:pre"><span style="color:#dcdcdc;-webkit-text-stroke:0.3px #dcdcdc">        </span><span style="color:#179fff;-webkit-text-stroke:0.3px #179fff">}</span></div>
</div>
<div style="position:absolute;left:754px;top:776px;width:590px;height:6px;background:#e0e0e0;"></div>
<div style="position:absolute;left:754px;top:781px;width:590px;height:1px;background:#6a6a6a;"></div>
<div style="position:absolute;left:754px;top:782px;width:574px;height:22px;background:#fff;"></div>
<div style="position:absolute;left:1328px;top:782px;width:16px;height:25px;background:#eeeeee;"></div>
<div style="position:absolute;left:754px;top:804px;width:574px;height:3px;background:#e6e6e6;"></div>
<div style="position:absolute;left:754px;top:804px;width:23px;height:3px;background:#fff;"></div>
<div style="position:absolute;left:777px;top:804px;width:34px;height:3px;background:#3d8ee0;"></div>
<div style="position:absolute;left:777px;top:782px;width:1px;height:22px;background:#c8c8c8;"></div>
<div style="position:absolute;left:811px;top:782px;width:1px;height:22px;background:#e8e8e8;"></div>
<div style="position:absolute;left:858px;top:782px;width:1px;height:25px;background:#c8c8c8;"></div>
<div style="position:absolute;left:785px;top:788.15px;font-family:'Liberation Sans';font-size:11px;color:#1a1a1a;white-space:pre;line-height:1;transform:scaleX(0.9376);transform-origin:0 0;">Line</div>
<div style="position:absolute;left:818px;top:788.15px;font-family:'Liberation Sans';font-size:11px;color:#1a1a1a;white-space:pre;line-height:1;transform:scaleX(0.9057);transform-origin:0 0;">Priority</div>
<div style="position:absolute;left:866px;top:788.15px;font-family:'Liberation Sans';font-size:11px;color:#1a1a1a;white-space:pre;line-height:1;transform:scaleX(0.9522);transform-origin:0 0;">Message</div>
<div style="position:absolute;left:751px;top:54px;width:614px;height:1px;background:#6e6e6e;"></div>
<div style="position:absolute;left:2px;top:812px;width:1366px;height:30px;background:#f0f0f0;"></div>
<div style="position:absolute;left:5px;top:814px;width:106px;height:26px;background:#f6f6f6;border-top:1px solid #707070;"></div>
<svg style="position:absolute;left:13px;top:821px;" width="15" height="15" viewBox="0 0 16 16"><rect x="0.5" y="1.5" width="15" height="13" fill="#fafafa" stroke="#3a3030"/><rect x="0.5" y="1.5" width="15" height="2.5" fill="#3a3030"/><rect x="3" y="7" width="3" height="1.3" fill="#3a4a6a"/><rect x="3" y="10" width="3" height="1.3" fill="#3a4a6a"/><rect x="7.5" y="6.5" width="5.5" height="2.2" fill="#d08030"/><rect x="7.5" y="9.6" width="5.5" height="2.2" fill="#d08030"/></svg>
<div style="position:absolute;left:39.5px;top:823.77px;font-family:'Liberation Sans';font-size:12.5px;color:#1a1a1a;white-space:pre;line-height:1;transform:scaleX(0.8451);transform-origin:0 0;">[2] Screen (1)</div>
<div style="position:absolute;left:114px;top:814px;width:89px;height:26px;background:#ececec;border-top:1px solid #fafafa;border-right:2px solid #6e6e6e;border-bottom:2px solid #6e6e6e;"></div>
<svg style="position:absolute;left:125px;top:820px;" width="16" height="16" viewBox="0 0 16 16"><defs><linearGradient id="vsg" x1="0" y1="0" x2="1" y2="1"><stop offset="0" stop-color="#6a58c8"/><stop offset="1" stop-color="#b88ef0"/></linearGradient></defs><path d="M0.5 4.5 L4 2 L8 6.5 L12 1.5 L15.5 3.5 V12.5 L12 14.5 L8 9.5 L4 14 L0.5 11.5 Z" fill="url(#vsg)"/><path d="M0.5 4.5 L4 2 L8 6.5 L8 9.5 L4 14 L0.5 11.5 Z" fill="#5a4cb8"/><path d="M3 6.5 L5 8 L3 9.5 Z" fill="#e8e0f8"/><path d="M12.5 5.5 V10.5 L10 8 Z" fill="#f0e8fc"/></svg>
<div style="position:absolute;left:151.5px;top:822.77px;font-family:'Liberation Sans';font-size:12.5px;color:#1a1a1a;white-space:pre;line-height:1;transform:scaleX(0.8211);transform-origin:0 0;">[0] Script</div>
<div style="position:absolute;left:2px;top:840px;width:1366px;height:3px;background:#b8b8b8;"></div>
</body></html>
